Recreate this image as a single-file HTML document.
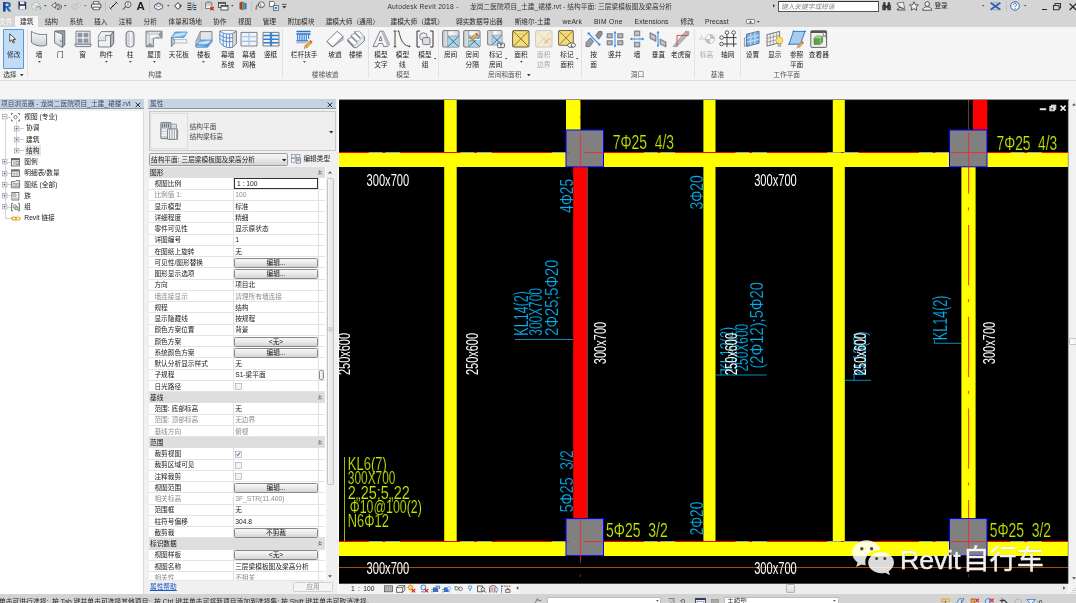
<!DOCTYPE html>
<html lang="zh"><head><meta charset="utf-8"><title>Autodesk Revit 2018</title>
<style>
html,body{margin:0;padding:0}
body{width:1076px;height:603px;overflow:hidden;position:relative;background:#f5f5f5;font-family:"Liberation Sans","Noto Sans CJK SC",sans-serif;font-size:6.7px;color:#1a1a1a;line-height:8px}
#app{position:absolute;left:-6px;top:-6px;width:1088px;height:615px;overflow:hidden;will-change:transform;filter:blur(.3px);background:#f5f5f5}
#in{position:absolute;left:6px;top:6px;width:1076px;height:603px}
.a{position:absolute;white-space:nowrap}
.c{position:absolute;white-space:nowrap;transform:translateX(-50%);text-align:center}
.g{color:#8c8c8c}
svg{position:absolute;display:block;overflow:visible}
svg text{font-family:"Liberation Sans","Noto Sans CJK SC",sans-serif}
.cad{font-family:"Liberation Sans",sans-serif;stroke:#000;stroke-width:.22px}
.btn{position:absolute;box-sizing:border-box;border:1px solid #8a8a8a;border-radius:1.5px;background:linear-gradient(#f8f8f8,#e9e9e9 50%,#d4d4d4);text-align:center;line-height:8px}
.row{position:absolute;left:149px;width:176px;height:11.25px;box-sizing:border-box;border-bottom:1px solid #e4e4e4;background:#fff}
.sec{position:absolute;left:149px;width:176px;height:11.25px;background:#dedede}
</style></head><body><div id="app"><div id="in">
<!--TOP-->
<div class="a" style="left:-6px;top:-6px;width:1088px;height:33px;background:#d5d5d5"></div>
<div class="a" style="left:14.8px;top:15.8px;width:23.6px;height:11.4px;background:#f5f5f5;border-radius:1px 1px 0 0"></div>
<div class="a" style="left:-1px;top:17.6px;color:#fff">文件</div>
<div class="a" style="left:20px;top:17.6px;color:#2a2a2a">建筑</div>
<div class="a" style="left:44.7px;top:17.6px;color:#2a2a2a">结构</div>
<div class="a" style="left:69.5px;top:17.6px;color:#2a2a2a">系统</div>
<div class="a" style="left:94.1px;top:17.6px;color:#2a2a2a">插入</div>
<div class="a" style="left:118.8px;top:17.6px;color:#2a2a2a">注释</div>
<div class="a" style="left:143.5px;top:17.6px;color:#2a2a2a">分析</div>
<div class="a" style="left:168.6px;top:17.6px;color:#2a2a2a">体量和场地</div>
<div class="a" style="left:213.1px;top:17.6px;color:#2a2a2a">协作</div>
<div class="a" style="left:238px;top:17.6px;color:#2a2a2a">视图</div>
<div class="a" style="left:262.7px;top:17.6px;color:#2a2a2a">管理</div>
<div class="a" style="left:287.6px;top:17.6px;color:#2a2a2a">附加模块</div>
<div class="a" style="left:325.7px;top:17.6px;color:#2a2a2a">建模大师（通用）</div>
<div class="a" style="left:390.5px;top:17.6px;color:#2a2a2a">建模大师（建筑）</div>
<div class="a" style="left:456px;top:17.6px;color:#2a2a2a">翱实数据导出器</div>
<div class="a" style="left:514.7px;top:17.6px;color:#2a2a2a">斯维尔-土建</div>
<div class="a" style="left:562.6px;top:17.6px;color:#2a2a2a;letter-spacing:0.16px">weArk</div>
<div class="a" style="left:594px;top:17.6px;color:#2a2a2a;letter-spacing:0.34px">BIM One</div>
<div class="a" style="left:634.6px;top:17.6px;color:#2a2a2a;letter-spacing:0.12px">Extensions</div>
<div class="a" style="left:680.5px;top:17.6px;color:#2a2a2a">修改</div>
<div class="a" style="left:705px;top:17.6px;color:#2a2a2a;letter-spacing:0.14px">Precast</div>
<svg style="left:746px;top:19.4px" width="9" height="5" viewBox="0 0 9 5"><rect x=".4" y=".4" width="8.2" height="4.2" rx="1" fill="#f4f4f4" stroke="#555" stroke-width=".7"/><path d="M3 3.4L4.5 1.6L6 3.4Z" fill="#333"/></svg>
<svg style="left:757px;top:21.2px" width="2.6" height="1.7" viewBox="0 0 2.6 1.7"><path d="M0 0H2.6L1.3 1.7Z" fill="#333"/></svg>
<div class="a" style="left:387.4px;top:2.7px;color:#333;letter-spacing:.26px">Autodesk Revit 2018 -</div>
<div class="a" style="left:470px;top:2.7px;color:#333;letter-spacing:.05px">龙岗二医院项目_土建_裙楼.rvt - 结构平面: 三层梁模板图及梁高分析</div>
<svg style="left:1.6px;top:0.8px" width="10" height="11" viewBox="0 0 10 11"><path d="M1 1H5.5C8 1 8.8 2.4 8.8 3.8C8.8 5.4 7.8 6.4 6.2 6.6L9.4 10.4H6.6L4 6.8H3.4V10.4H1Z" fill="#1f63b5"/><path d="M3.4 2.8V5H5.2C6.2 5 6.6 4.5 6.6 3.9C6.6 3.2 6.2 2.8 5.2 2.8Z" fill="#d5d5d5"/><path d="M1 1H3.4V10.4H1Z" fill="#164a94"/></svg>
<svg style="left:18px;top:1.2px" width="8.6" height="8.6" viewBox="0 0 8.6 8.6"><path d="M.4 .4H7.2L8.2 1.4V8.2H.4Z" fill="#27335a"/><rect x="2" y=".4" width="4.4" height="2.8" fill="#e9ecf3"/><rect x="1.6" y="4.8" width="5.4" height="3.4" fill="#f2f2f2"/></svg>
<svg style="left:31px;top:0.8px" width="10.5" height="10" viewBox="0 0 10.5 10"><path d="M1 3L5 1L9 3V7.4L5 9.4L1 7.4Z" fill="#e6e6e6" stroke="#a9a9a9" stroke-width=".6"/><path d="M1 3L5 5L9 3M5 5V9.4" fill="none" stroke="#b5b5b5" stroke-width=".5"/><path d="M5.6 7.6A2 2 0 1 1 9.4 8.4" fill="none" stroke="#58a855" stroke-width="1"/></svg>
<svg style="left:44.2px;top:5.2px" width="2.6" height="1.6" viewBox="0 0 2.6 1.6"><path d="M0 0H2.6L1.3 1.6Z" fill="#444"/></svg>
<svg style="left:51px;top:1.6px" width="11" height="8" viewBox="0 0 11 8"><path d="M.6 3.4L4.6 .5V2.2H7.2C9.4 2.2 10.4 3.5 10.4 5C10.4 6.6 9.2 7.5 7.4 7.5H6.4V6.3H7.2C8.4 6.3 9 5.8 9 5C9 4.1 8.4 3.6 7.2 3.6H4.6V6.3Z" fill="#f2f2f2" stroke="#333" stroke-width=".7" stroke-linejoin="round"/></svg>
<svg style="left:64.2px;top:5.2px" width="2.6" height="1.6" viewBox="0 0 2.6 1.6"><path d="M0 0H2.6L1.3 1.6Z" fill="#444"/></svg>
<svg style="left:71px;top:1.6px" width="11" height="8" viewBox="0 0 11 8"><path d="M10.4 3.4L6.4 .5V2.2H3.8C1.6 2.2 .6 3.5 .6 5C.6 6.6 1.8 7.5 3.6 7.5H4.6V6.3H3.8C2.6 6.3 2 5.8 2 5C2 4.1 2.6 3.6 3.8 3.6H6.4V6.3Z" fill="#dedede" stroke="#b9b9b9" stroke-width=".7" stroke-linejoin="round"/></svg>
<svg style="left:84.4px;top:5.2px" width="2.6" height="1.6" viewBox="0 0 2.6 1.6"><path d="M0 0H2.6L1.3 1.6Z" fill="#777"/></svg>
<svg style="left:91px;top:1.4px" width="10.4" height="9.4" viewBox="0 0 10.4 9.4"><path d="M2.4 3V.6H8V3" fill="#fff" stroke="#333" stroke-width=".7"/><rect x=".5" y="3" width="9.4" height="4.2" rx="1" fill="#f0f0f0" stroke="#222" stroke-width=".8"/><path d="M2 6.2H8.4V8.8H2Z" fill="#fff" stroke="#333" stroke-width=".7"/></svg>
<div class="a" style="left:105px;top:1px;width:0;height:11px;border-left:1px solid #c2c2c2"></div>
<svg style="left:109px;top:1.4px" width="9" height="9" viewBox="0 0 9 9"><path d="M1.4 7.6L7.6 1.4" stroke="#222" stroke-width="1"/><path d="M.4 6.4L2.6 8.6M6.4 .4L8.6 2.6" stroke="#222" stroke-width=".8"/><path d="M3.4 4.4L4.6 5.6" stroke="#1f63b5" stroke-width=".8"/></svg>
<svg style="left:122px;top:1.4px" width="10" height="9.4" viewBox="0 0 10 9.4"><circle cx="6" cy="3.6" r="3" fill="#f4f4f4" stroke="#333" stroke-width=".8"/><path d="M3.6 5.6L.8 8.8" stroke="#333" stroke-width="1"/><path d="M6 2V5" stroke="#333" stroke-width=".7"/></svg>
<div class="a" style="left:136.4px;top:-0.4px;font-size:11.5px;line-height:12px;font-weight:bold;color:#222">A</div>
<div class="a" style="left:149px;top:1px;width:0;height:11px;border-left:1px solid #c2c2c2"></div>
<svg style="left:153.6px;top:1.6px" width="9.4" height="8.4" viewBox="0 0 9.4 8.4"><path d="M.6 3L4.6 .8L8.6 3V6L4.6 8L.6 6Z" fill="#e9edf3" stroke="#3a4b6b" stroke-width=".8"/><ellipse cx="4.6" cy="3.2" rx="2.4" ry="1.2" fill="#fff" stroke="#3a4b6b" stroke-width=".6"/></svg>
<svg style="left:166.8px;top:5.2px" width="2.6" height="1.6" viewBox="0 0 2.6 1.6"><path d="M0 0H2.6L1.3 1.6Z" fill="#444"/></svg>
<svg style="left:173.6px;top:1.8px" width="8.4" height="8" viewBox="0 0 8.4 8"><path d="M4 .6L7.4 4L4 7.4L.6 4Z" fill="#fafafa" stroke="#222" stroke-width=".9"/><path d="M5.6 2.4L7.6 4L5.6 5.6Z" fill="#222"/></svg>
<svg style="left:187px;top:1.6px" width="9.6" height="8.6" viewBox="0 0 9.6 8.6"><path d="M.4 1.2H4.4M.4 3.4H4.4M.4 5.6H4.4M.4 7.6H4.4M6.4 3.4H9.2M6.4 5.6H9.2M6.4 7.6H9.2" stroke="#222" stroke-width=".9"/><path d="M6.6 .4L4.6 8.2" stroke="#2d8fe0" stroke-width=".9"/></svg>
<div class="a" style="left:200.6px;top:1px;width:0;height:11px;border-left:1px solid #c2c2c2"></div>
<svg style="left:205px;top:1.4px" width="9.4" height="9.4" viewBox="0 0 9.4 9.4"><rect x=".5" y="2" width="6.4" height="5.6" fill="#f2f2f2" stroke="#555" stroke-width=".7"/><path d="M1.6 .6H6M.5 4H6.9" stroke="#777" stroke-width=".6"/><path d="M5.4 6L8.8 9.2M8.8 6L5.4 9.2" stroke="#e02020" stroke-width="1.2"/></svg>
<svg style="left:217.6px;top:1.6px" width="10.6" height="8.6" viewBox="0 0 10.6 8.6"><rect x=".5" y=".5" width="7" height="5" fill="#f4f4f4" stroke="#333" stroke-width=".8"/><rect x="3" y="3.4" width="7" height="4.6" fill="#fff" stroke="#333" stroke-width=".8"/><path d="M.5 1.6H7.5M3 4.6H10" stroke="#333" stroke-width=".8"/></svg>
<svg style="left:231px;top:5.2px" width="2.6" height="1.6" viewBox="0 0 2.6 1.6"><path d="M0 0H2.6L1.3 1.6Z" fill="#444"/></svg>
<svg style="left:239px;top:1.2px" width="8" height="9.6" viewBox="0 0 8 9.6"><path d="M.5 1.5L3.4 .4V9.2L.5 8Z" fill="#b5382e"/><path d="M3.4 .4L5.6 1.4V8.6L3.4 9.2Z" fill="#4a9a4a"/><path d="M5.6 1.4L7.6 2.2V8L5.6 8.6Z" fill="#3f6fc4"/></svg>
<div class="a" style="left:251.4px;top:1px;width:0;height:11px;border-left:1px solid #c2c2c2"></div>
<svg style="left:254.6px;top:1.4px" width="10.4" height="9.6" viewBox="0 0 10.4 9.6"><circle cx="6.4" cy="3.8" r="3" fill="#f4f4f4" stroke="#444" stroke-width=".8"/><path d="M1 8.8C1 5.6 2.4 3 4.4 2.4" fill="none" stroke="#444" stroke-width=".9"/><path d="M5.6 2.6V5.4H7.4" fill="none" stroke="#555" stroke-width=".6"/></svg>
<svg style="left:269px;top:1.2px" width="10" height="9.8" viewBox="0 0 10 9.8"><path d="M.5 .5H4.6L5.6 1.6V5.6H.5Z" fill="#fafafa" stroke="#444" stroke-width=".7"/><rect x="4.4" y="4.4" width="5" height="5" fill="#fff" stroke="#444" stroke-width=".7"/><rect x="5.6" y="5.8" width="2.6" height="2.4" fill="#3a86d8"/></svg>
<svg style="left:282.4px;top:3.6px" width="4.6" height="4.6" viewBox="0 0 4.6 4.6"><path d="M0 .4H4.6" stroke="#333" stroke-width=".8"/><path d="M.2 2H4.4L2.3 4.4Z" fill="#333"/></svg>
<svg style="left:773.4px;top:3.6px" width="2" height="3.4" viewBox="0 0 2 3.4"><path d="M0 0L2 1.7L0 3.4Z" fill="#333"/></svg>
<div class="a" style="left:778.4px;top:0.6px;width:100.8px;height:11.4px;box-sizing:border-box;border:1px solid #555;border-top:1.4px solid #333;background:#fff"></div>
<div class="a" style="left:781px;top:2.8px;color:#8a8a8a;font-style:italic">键入关键字或短语</div>
<svg style="left:882px;top:1.8px" width="9.6" height="8.6" viewBox="0 0 9.6 8.6"><path d="M.6 3.2H3.6V8H.6ZM5.6 3.2H8.6V8H5.6ZM1.4 .6H3.2V3.2H1.4ZM6 .6H7.8V3.2H6ZM3.6 4H5.6V5.6H3.6Z" fill="#444" stroke="#222" stroke-width=".5"/></svg>
<svg style="left:896px;top:1.4px" width="10.6" height="9.6" viewBox="0 0 10.6 9.6"><path d="M1 2.2C2.4 6 5 7.4 8.6 7.4" fill="none" stroke="#333" stroke-width=".9"/><path d="M1 2.2L7.4 1.2L8.6 7.4" fill="#f2f2f2" stroke="#333" stroke-width=".6"/><path d="M3.6 6L1 9H9.6" fill="none" stroke="#333" stroke-width=".8"/></svg>
<svg style="left:909px;top:1.2px" width="10" height="9.6" viewBox="0 0 10 9.6"><path d="M5 .8L6.3 3.7L9.4 4L7.1 6.1L7.8 9.2L5 7.6L2.2 9.2L2.9 6.1L.6 4L3.7 3.7Z" fill="#f6f6f6" stroke="#333" stroke-width=".8" stroke-linejoin="round"/></svg>
<svg style="left:922px;top:1.2px" width="10.4" height="9.6" viewBox="0 0 10.4 9.6"><circle cx="5.2" cy="3" r="2.3" fill="#f4f4f4" stroke="#333" stroke-width=".8"/><path d="M.6 9.2C1 6.8 2.8 5.8 5.2 5.8C7.6 5.8 9.4 6.8 9.8 9.2Z" fill="#f4f4f4" stroke="#333" stroke-width=".8"/></svg>
<div class="a" style="left:934.4px;top:2.4px;color:#222">登录</div>
<svg style="left:982.4px;top:5.4px" width="2.4" height="1.5" viewBox="0 0 2.4 1.5"><path d="M0 0H2.4L1.2 1.5Z" fill="#444"/></svg>
<svg style="left:990.4px;top:1.6px" width="11" height="8.6" viewBox="0 0 11 8.6"><path d="M.6 .8L5.5 4.3L.6 7.8M10.4 .8L5.5 4.3L10.4 7.8" fill="none" stroke="#2c5fa8" stroke-width="1.7"/><path d="M2.6 .8H8.4M2.6 7.8H8.4" stroke="#7aa0d4" stroke-width=".8"/></svg>
<div class="a" style="left:1005.8px;top:1px;width:0;height:11px;border-left:1px solid #c2c2c2"></div>
<svg style="left:1010px;top:1.2px" width="10" height="10" viewBox="0 0 10 10"><circle cx="5" cy="5" r="4.3" fill="#f6f8fc" stroke="#2c5fa8" stroke-width=".9"/><path d="M3.6 3.8C3.6 2.8 4.2 2.3 5 2.3C5.9 2.3 6.5 2.9 6.5 3.7C6.5 4.8 5 4.9 5 6.2" fill="none" stroke="#2c5fa8" stroke-width=".95"/><circle cx="5" cy="7.6" r=".6" fill="#2c5fa8"/></svg>
<svg style="left:1023.6px;top:5.4px" width="2.4" height="1.5" viewBox="0 0 2.4 1.5"><path d="M0 0H2.4L1.2 1.5Z" fill="#444"/></svg>
<div class="a" style="left:1041.6px;top:8.6px;width:5px;height:1.2px;background:#222"></div>
<svg style="left:1053px;top:2.6px" width="8.4" height="7.4" viewBox="0 0 8.4 7.4"><rect x="2" y=".5" width="5.6" height="4.4" fill="none" stroke="#222" stroke-width=".9"/><rect x=".5" y="2.6" width="5.6" height="4.2" fill="#d5d5d5" stroke="#222" stroke-width=".9"/></svg>
<svg style="left:1068.6px;top:2.6px" width="8" height="7.6" viewBox="0 0 8 7.6"><path d="M.6 .6L7.2 7M7.2 .6L.6 7" stroke="#222" stroke-width="1.2"/></svg>
<div class="a" style="left:-6px;top:27px;width:1088px;height:53.6px;background:#f5f5f5;border-bottom:1px solid #dcdcdc;box-sizing:border-box"></div>
<div class="a" style="left:2.9px;top:28.6px;width:21.6px;height:40.8px;box-sizing:border-box;border:1px solid #4f9be0;border-radius:1px;background:#c3dcf3"></div>
<svg style="left:9.4px;top:33px" width="7" height="11" viewBox="0 0 7 11"><path d="M.8 .8V8.6L2.8 6.8L4.2 10L5.4 9.4L4 6.4H6.6Z" fill="#fff" stroke="#222" stroke-width=".8" stroke-linejoin="round"/></svg>
<div class="c" style="left:13.7px;top:51px;color:#1c2b45">修改</div>
<div class="a" style="left:3.2px;top:71.3px;color:#333">选择</div>
<svg style="left:19.6px;top:73.8px" width="3.6" height="2.2" viewBox="0 0 3.6 2.2"><path d="M0 0H3.6L1.8 2.2Z" fill="#333"/></svg>
<div class="a" style="left:27.3px;top:29px;width:0;height:49px;border-left:1px solid #e2e2e2"></div>
<div class="a" style="left:282px;top:29px;width:0;height:49px;border-left:1px solid #e2e2e2"></div>
<div class="a" style="left:368.4px;top:29px;width:0;height:49px;border-left:1px solid #e2e2e2"></div>
<div class="a" style="left:438px;top:29px;width:0;height:49px;border-left:1px solid #e2e2e2"></div>
<div class="a" style="left:581.4px;top:29px;width:0;height:49px;border-left:1px solid #e2e2e2"></div>
<div class="a" style="left:694.3px;top:29px;width:0;height:49px;border-left:1px solid #e2e2e2"></div>
<div class="a" style="left:740.3px;top:29px;width:0;height:49px;border-left:1px solid #e2e2e2"></div>
<div class="c" style="left:155px;top:71.3px;color:#555">构建</div>
<div class="c" style="left:325.2px;top:71.3px;color:#555">楼梯坡道</div>
<div class="c" style="left:403px;top:71.3px;color:#555">模型</div>
<div class="c" style="left:637.4px;top:71.3px;color:#555">洞口</div>
<div class="c" style="left:717.4px;top:71.3px;color:#555">基准</div>
<div class="c" style="left:786.7px;top:71.3px;color:#555">工作平面</div>
<div class="a" style="left:488px;top:71.3px;color:#555">房间和面积</div>
<svg style="left:527px;top:73.8px" width="3.6" height="2.2" viewBox="0 0 3.6 2.2"><path d="M0 0H3.6L1.8 2.2Z" fill="#333"/></svg>
<svg style="left:0;top:0" width="0" height="0"><defs><linearGradient id="gv" x1="0" y1="0" x2="0" y2="1"><stop offset="0" stop-color="#fafbfc"/><stop offset="1" stop-color="#c9cdd3"/></linearGradient><linearGradient id="gh" x1="0" y1="0" x2="1" y2="0"><stop offset="0" stop-color="#c4c8ce"/><stop offset=".5" stop-color="#f7f8f9"/><stop offset="1" stop-color="#cfd3d8"/></linearGradient><linearGradient id="gb" x1="0" y1="0" x2="1" y2="1"><stop offset="0" stop-color="#3f9ae8"/><stop offset=".5" stop-color="#b9defa"/><stop offset="1" stop-color="#3f9ae8"/></linearGradient></defs></svg>
<svg style="left:30px;top:29.8px" width="18" height="18" viewBox="0 0 18 18"><path d="M1.4 1.4C6 4.6 12 5 16.6 4.2V15C12 16.8 6 16.4 1.4 12.4Z" fill="url(#gv)" stroke="#5f646c" stroke-width=".8" stroke-linejoin="round"/></svg>
<div class="c" style="left:39px;top:51px;color:#222">墙</div>
<svg style="left:37.6px;top:61.4px" width="2.8" height="1.7" viewBox="0 0 2.8 1.7"><path d="M0 0H2.8L1.4 1.7Z" fill="#444"/></svg>
<svg style="left:51.2px;top:29.8px" width="18" height="18" viewBox="0 0 18 18"><path d="M4 1L13.8 .6V15L11 17.4Z" fill="#9aa0ab" stroke="#5f646c" stroke-width=".8" stroke-linejoin="round"/><path d="M3.6 1.4L11.4 4V17.4L3.6 13Z" fill="url(#gv)" stroke="#5f646c" stroke-width=".8" stroke-linejoin="round"/><circle cx="9.8" cy="11" r=".7" fill="#666"/></svg>
<div class="c" style="left:60.2px;top:51px;color:#222">门</div>
<svg style="left:73.7px;top:29.8px" width="18" height="18" viewBox="0 0 18 18"><rect x="2" y="1.2" width="14" height="13" fill="#f2f3f5" stroke="#5f646c" stroke-width=".8" stroke-linejoin="round"/><path d="M3.6 2.8H8.4V7.2H3.6ZM9.6 2.8H14.4V7.2H9.6ZM3.6 8.4H8.4V12.8H3.6ZM9.6 8.4H14.4V12.8H9.6Z" fill="#8d95a3"/><path d="M.8 14.2H17.2L16.4 16.6H1.6Z" fill="#e9ebee" stroke="#5f646c" stroke-width=".8" stroke-linejoin="round"/></svg>
<div class="c" style="left:82.7px;top:51px;color:#222">窗</div>
<svg style="left:97.3px;top:29.8px" width="18" height="18" viewBox="0 0 18 18"><path d="M1.4 6L4.4 1.6H16.6V13.4L13.6 17H1.4Z" fill="#eef0f2" stroke="#5f646c" stroke-width=".8" stroke-linejoin="round"/><path d="M16.6 1.6L13.6 5.4V17" fill="none" stroke="#5f646c" stroke-width=".8" stroke-linejoin="round"/><path d="M13.6 5.4H8.6V10.6H1.4" fill="none" stroke="#5f646c" stroke-width=".8" stroke-linejoin="round"/><path d="M13.6 5.4V17L16.6 13.4V1.6Z" fill="#b9bec6" stroke="#5f646c" stroke-width=".8" stroke-linejoin="round"/><path d="M1.6 6.2H8.4V10.4H1.6Z" fill="#dfe2e6"/></svg>
<div class="c" style="left:106.3px;top:51px;color:#222">构件</div>
<svg style="left:104.89999999999999px;top:61.4px" width="2.8" height="1.7" viewBox="0 0 2.8 1.7"><path d="M0 0H2.8L1.4 1.7Z" fill="#444"/></svg>
<svg style="left:121px;top:29.8px" width="18" height="18" viewBox="0 0 18 18"><rect x="5" y="1.2" width="8" height="15.8" rx="3.2" fill="url(#gh)" stroke="#5f646c" stroke-width=".8" stroke-linejoin="round"/><path d="M8 3V15.4" stroke="#aab0b8" stroke-width=".8"/></svg>
<div class="c" style="left:130px;top:51px;color:#222">柱</div>
<svg style="left:128.6px;top:61.4px" width="2.8" height="1.7" viewBox="0 0 2.8 1.7"><path d="M0 0H2.8L1.4 1.7Z" fill="#444"/></svg>
<svg style="left:145px;top:29.8px" width="18" height="18" viewBox="0 0 18 18"><path d="M1 1.2H17V8H8.4V16.8H1Z" fill="#d9dce0" stroke="#5f646c" stroke-width=".8" stroke-linejoin="round"/><path d="M1 1.2L4.6 4.6H13.6L17 1.2M4.6 4.6V13.4L1 16.8M13.6 4.6L17 8M4.6 13.4L8.4 16.8" fill="none" stroke="#868c95" stroke-width=".7"/><path d="M4.6 4.6H13.6V5.6L8.4 8L5.6 8V13.4H4.6Z" fill="#f7f8f9"/><path d="M1 16.8L4.6 13.4H5.6L8.4 16.8Z" fill="#8f959e"/><path d="M13.6 4.6L17 1.2V8Z" fill="#8f959e"/></svg>
<div class="c" style="left:154px;top:51px;color:#222">屋顶</div>
<svg style="left:152.6px;top:61.4px" width="2.8" height="1.7" viewBox="0 0 2.8 1.7"><path d="M0 0H2.8L1.4 1.7Z" fill="#444"/></svg>
<svg style="left:169.8px;top:29.8px" width="18" height="18" viewBox="0 0 18 18"><path d="M1.4 7.4V16.6L4.6 13V9.6Z" fill="#c3c7cd" stroke="#5f646c" stroke-width=".8" stroke-linejoin="round"/><path d="M4.6 9.6H16.8V13H4.6Z" fill="#f4f5f6" stroke="#9096a0" stroke-width=".6"/><path d="M1.4 7.4L5.2 2H17.4L14 7.4Z" fill="url(#gb)" stroke="#3b82c9" stroke-width=".7" stroke-linejoin="round"/><path d="M5 5.4C7 3.6 9 6 11 4.4C12.4 3.4 13.6 4.2 14.6 3.6" fill="none" stroke="#eaf6ff" stroke-width=".9"/></svg>
<div class="c" style="left:178.8px;top:51px;color:#222">天花板</div>
<svg style="left:194.7px;top:29.8px" width="18" height="18" viewBox="0 0 18 18"><path d="M1 11.4L5.4 1.6H17V10.2L12.6 17H1Z" fill="#e3e5e8" stroke="#5f646c" stroke-width=".8" stroke-linejoin="round"/><path d="M5.4 1.6V10.2H17M5.4 10.2L1 15" fill="none" stroke="#8b919a" stroke-width=".7"/><path d="M1.2 11.8L5.4 1.8V10.2Z" fill="#aeb3bb"/><path d="M1 15L5.4 10.2H17L12.6 15ZM1 15H12.6V17H1ZM12.6 15L17 10.2V12L12.6 17Z" fill="url(#gb)" stroke="#3b82c9" stroke-width=".6" stroke-linejoin="round"/><path d="M4 13.4C6 11.8 8 14 10 12.6C11.6 11.6 13 12.4 14.4 11.4" fill="none" stroke="#eaf6ff" stroke-width=".9"/></svg>
<div class="c" style="left:203.7px;top:51px;color:#222">楼板</div>
<svg style="left:202.29999999999998px;top:61.4px" width="2.8" height="1.7" viewBox="0 0 2.8 1.7"><path d="M0 0H2.8L1.4 1.7Z" fill="#444"/></svg>
<svg style="left:218.7px;top:29.8px" width="18" height="18" viewBox="0 0 18 18"><path d="M.8 1C4 4 9 4.6 13.6 3.6L17.4 1.2V13.6L13.6 17.4C9 18 4 17.4 .8 12Z" fill="#f3f6fa" stroke="#3c6fb3" stroke-width=".8" stroke-linejoin="round"/><path d="M.8 1C5 .2 12 -.2 17.4 1.2" fill="none" stroke="#777" stroke-width=".7"/><path d="M13.6 3.6V17.4L17.4 13.6V1.2Z" fill="#d5d9de" stroke="#666" stroke-width=".6"/><path d="M4.2 3.4V15.6M7.4 4.2V16.9M10.6 4.2V17.4M.8 4.8C4 7.8 9 8.4 13.6 7.6M.8 8.6C4 11.6 9 12.2 13.6 11.4" fill="none" stroke="#3c78c4" stroke-width=".8"/></svg>
<div class="c" style="left:227.7px;top:51px;color:#222">幕墙</div>
<div class="c" style="left:227.7px;top:61px;color:#222">系统</div>
<svg style="left:240px;top:29.8px" width="18" height="18" viewBox="0 0 18 18"><rect x="1" y="2.4" width="16" height="13.6" fill="#f2f3f5" stroke="#5f646c" stroke-width=".8" stroke-linejoin="round"/><path d="M1.4 6.8H16.6M1.4 11.4H16.6M9 2.8V15.6" stroke="#8cc2f2" stroke-width="1.1"/><path d="M1.4 6.2H16.6M1.4 10.8H16.6" stroke="#d0d4da" stroke-width=".5"/></svg>
<div class="c" style="left:249px;top:51px;color:#222">幕墙</div>
<div class="c" style="left:249px;top:61px;color:#222">网格</div>
<svg style="left:261.6px;top:29.8px" width="18" height="18" viewBox="0 0 18 18"><rect x="1" y="2.4" width="16" height="13.6" fill="#f2f3f5" stroke="#5f646c" stroke-width=".8" stroke-linejoin="round"/><path d="M1.2 5.6H16.8M1.2 9.2H16.8M1.2 12.8H16.8" stroke="#2e7fd4" stroke-width="1.5"/><path d="M9 2.4V16" stroke="#1f5fae" stroke-width="2.2"/><path d="M9 2.4V16" stroke="#8cc2f2" stroke-width=".7"/></svg>
<div class="c" style="left:270.6px;top:51px;color:#222">竖梃</div>
<svg style="left:295.2px;top:29.8px" width="18" height="18" viewBox="0 0 18 18"><path d="M1.4 1.6H15.6M1.4 4H15.6" stroke="#2d72c8" stroke-width="1.5"/><path d="M1.4 10.8H13" stroke="#2d72c8" stroke-width="1.3"/><path d="M2.6 4V10.6M4.8 4V10.6M7 4V10.6M9.2 4V10.6M11.4 4V10.6M13.6 4V9" stroke="#3b86dc" stroke-width="1.2"/><path d="M1.4 12.8H11" stroke="#9aa0aa" stroke-width="1"/><g transform="translate(10.4 17.2) scale(1.25)"><g transform="translate(0 0) rotate(45)"><rect x="-1.1" y="-6" width="2.2" height="5" fill="#f1b232" stroke="#8a5a12" stroke-width=".4"/><path d="M-1.1 -1L0 1.4L1.1 -1Z" fill="#f4d9a8" stroke="#8a5a12" stroke-width=".4"/><rect x="-1.1" y="-7" width="2.2" height="1.2" fill="#d2553f"/></g></g></svg>
<div class="c" style="left:304.2px;top:51px;color:#222">栏杆扶手</div>
<svg style="left:302.8px;top:61.4px" width="2.8" height="1.7" viewBox="0 0 2.8 1.7"><path d="M0 0H2.8L1.4 1.7Z" fill="#444"/></svg>
<svg style="left:326px;top:29.8px" width="18" height="18" viewBox="0 0 18 18"><path d="M.9 11.4L11.2 1.3L17 6.5V9.6L6.5 17Z" fill="#fdfdfe" stroke="#5f646c" stroke-width=".8" stroke-linejoin="round"/><path d="M6.5 17L17 6.5V9.6Z" fill="#b4bcc8"/><path d="M.9 11.4L6.5 17L17 6.5" fill="none" stroke="#5f646c" stroke-width=".8" stroke-linejoin="round"/></svg>
<div class="c" style="left:335px;top:51px;color:#222">坡道</div>
<svg style="left:346.6px;top:29.8px" width="18" height="18" viewBox="0 0 18 18"><path d="M.8 9.2L4.2 7.6V5.2L7.6 3.6V1.6L12 1.3L17.4 6.9V10.9L9.6 17.6H6.8L.8 11.2Z" fill="#e6e8ec" stroke="#5f646c" stroke-width=".8" stroke-linejoin="round"/><path d="M4.2 7.6V5.2L10.4 11.2V13.6ZM7.6 3.6V1.6L13.4 7.4V9.4Z" fill="#8a919e"/><path d="M.8 9.2L7 15.4V17.6H6.8L.8 11.2Z" fill="#757c88"/><path d="M.8 9.2L4.2 7.6L10.4 13.6L7 15.4ZM4.2 5.2L7.6 3.6L13.4 9.4L10.4 11.2ZM7.6 1.6L12 1.3L17.4 6.9L13.4 7.4Z" fill="#fdfdfe" stroke="#7d838d" stroke-width=".4" stroke-linejoin="round"/></svg>
<div class="c" style="left:355.6px;top:51px;color:#222">楼梯</div>
<svg style="left:372px;top:29.8px" width="18" height="18" viewBox="0 0 18 18"><path d="M1 16.6L8 1.2H11.4L17.6 14.6L15.4 16.6H11.6L10.6 13.4H6.4L5.2 16.6Z" fill="#f4f5f7" stroke="#5f646c" stroke-width=".8" stroke-linejoin="round"/><path d="M7.2 10.6H10L8.6 6.4Z" fill="#f5f5f5" stroke="#5f646c" stroke-width=".8" stroke-linejoin="round"/><path d="M11.4 1.2L17.6 14.6L15.4 16.6L9.4 2.4Z" fill="#b9bec6"/></svg>
<div class="c" style="left:381px;top:51px;color:#222">模型</div>
<div class="c" style="left:381px;top:61px;color:#222">文字</div>
<svg style="left:393.4px;top:29.8px" width="18" height="18" viewBox="0 0 18 18"><path d="M2 1V16.8M.6 1H3.4M.6 16.8H3.4" fill="none" stroke="#333" stroke-width=".9"/><path d="M5.4 1C7 1.6 6.6 15.4 16.6 16.4" fill="none" stroke="#333" stroke-width=".9"/><circle cx="5.4" cy="1.2" r=".8" fill="#333"/><circle cx="16.6" cy="16.4" r=".8" fill="#333"/></svg>
<div class="c" style="left:402.4px;top:51px;color:#222">模型</div>
<div class="c" style="left:402.4px;top:61px;color:#222">线</div>
<svg style="left:416px;top:29.8px" width="18" height="18" viewBox="0 0 18 18"><path d="M4 1H1V17H4M14 1H17V17H14" fill="none" stroke="#333" stroke-width="1"/><circle cx="7.4" cy="6.6" r="3.8" fill="#eceef1" stroke="#5f646c" stroke-width=".8" stroke-linejoin="round"/><rect x="6.6" y="7.6" width="7.4" height="7" rx="1" fill="#dcdfe3" stroke="#5f646c" stroke-width=".8" stroke-linejoin="round"/></svg>
<div class="c" style="left:425px;top:51px;color:#222">模型</div>
<div class="c" style="left:425px;top:61px;color:#222">组</div>
<svg style="left:434px;top:58.2px" width="2.4" height="1.5" viewBox="0 0 2.4 1.5"><path d="M0 0H2.4L1.2 1.5Z" fill="#444"/></svg>
<svg style="left:441.6px;top:29.8px" width="18" height="18" viewBox="0 0 18 18"><g opacity="1"><rect x=".6" y=".6" width="16.4" height="16.4" rx="1" fill="url(#gh)" stroke="#6a6f77" stroke-width=".9"/><rect x="5.8" y="6.2" width="11" height="10.6" fill="#a9d4ec"/><path d="M5.8 6.2L16.8 16.8M16.8 6.2L5.8 16.8" stroke="#2e3f55" stroke-width=".7"/><path d="M5.6 .8V17M5.6 6H17" stroke="#8a9098" stroke-width=".7"/></g></svg>
<div class="c" style="left:450.6px;top:51px;color:#222">房间</div>
<svg style="left:463.2px;top:29.8px" width="18" height="18" viewBox="0 0 18 18"><g opacity="1"><rect x=".6" y=".6" width="16.4" height="16.4" rx="1" fill="url(#gh)" stroke="#6a6f77" stroke-width=".9"/><rect x="5.8" y="6.2" width="11" height="10.6" fill="#a9d4ec"/><path d="M5.8 6.2L16.8 16.8M16.8 6.2L5.8 16.8" stroke="#2e3f55" stroke-width=".7"/><path d="M5.6 .8V17M5.6 6H17" stroke="#8a9098" stroke-width=".7"/></g><path d="M5.8 9.4H16.8" stroke="#fff" stroke-width="1.2"/><path d="M5.8 8.6H16.8" stroke="#59a6e6" stroke-width=".7"/><g transform="translate(8.4 10) scale(1.25)"><g transform="translate(0 0) rotate(45)"><rect x="-1.1" y="-6" width="2.2" height="5" fill="#f1b232" stroke="#8a5a12" stroke-width=".4"/><path d="M-1.1 -1L0 1.4L1.1 -1Z" fill="#f4d9a8" stroke="#8a5a12" stroke-width=".4"/><rect x="-1.1" y="-7" width="2.2" height="1.2" fill="#d2553f"/></g></g></svg>
<div class="c" style="left:472.2px;top:51px;color:#222">房间</div>
<div class="c" style="left:472.2px;top:61px;color:#222">分隔</div>
<svg style="left:486.6px;top:29.8px" width="18" height="18" viewBox="0 0 18 18"><g transform="scale(.88)"><g opacity="1"><rect x=".6" y=".6" width="16.4" height="16.4" rx="1" fill="url(#gh)" stroke="#6a6f77" stroke-width=".9"/><rect x="5.8" y="6.2" width="11" height="10.6" fill="#a9d4ec"/><path d="M5.8 6.2L16.8 16.8M16.8 6.2L5.8 16.8" stroke="#2e3f55" stroke-width=".7"/><path d="M5.6 .8V17M5.6 6H17" stroke="#8a9098" stroke-width=".7"/></g></g><rect x="10.6" y="13.2" width="6.8" height="4.4" rx=".8" fill="#f2f2f2" stroke="#444" stroke-width=".8"/><path d="M13 14.6H15M14 14.4V16.6" stroke="#333" stroke-width=".7"/></svg>
<div class="c" style="left:495.6px;top:51px;color:#222">标记</div>
<div class="c" style="left:495.6px;top:61px;color:#222">房间</div>
<svg style="left:504.6px;top:58.2px" width="2.4" height="1.5" viewBox="0 0 2.4 1.5"><path d="M0 0H2.4L1.2 1.5Z" fill="#444"/></svg>
<svg style="left:512px;top:29.8px" width="18" height="18" viewBox="0 0 18 18"><g opacity="1"><rect x=".6" y=".6" width="16.4" height="16.4" rx="1.2" fill="#f6dc74" stroke="#5d5a50" stroke-width="1"/><path d="M1 1L16.6 16.6M16.6 1L1 16.6" stroke="#4a4535" stroke-width=".7"/><path d="M1 4.4H16.6" stroke="#d9bd55" stroke-width=".6"/></g></svg>
<div class="c" style="left:521px;top:51px;color:#222">面积</div>
<svg style="left:519.6px;top:61.4px" width="2.8" height="1.7" viewBox="0 0 2.8 1.7"><path d="M0 0H2.8L1.4 1.7Z" fill="#444"/></svg>
<svg style="left:534.7px;top:29.8px" width="18" height="18" viewBox="0 0 18 18"><g opacity="0.28"><rect x=".6" y=".6" width="16.4" height="16.4" rx="1.2" fill="#f6dc74" stroke="#5d5a50" stroke-width="1"/><path d="M1 1L16.6 16.6M16.6 1L1 16.6" stroke="#4a4535" stroke-width=".7"/><path d="M1 4.4H16.6" stroke="#d9bd55" stroke-width=".6"/></g><g opacity=".35"><g transform="translate(10 13) rotate(45)"><rect x="-1.1" y="-6" width="2.2" height="5" fill="#f1b232" stroke="#8a5a12" stroke-width=".4"/><path d="M-1.1 -1L0 1.4L1.1 -1Z" fill="#f4d9a8" stroke="#8a5a12" stroke-width=".4"/><rect x="-1.1" y="-7" width="2.2" height="1.2" fill="#d2553f"/></g></g></svg>
<div class="c" style="left:543.7px;top:51px;color:#a9a9a9">面积</div>
<div class="c" style="left:543.7px;top:61px;color:#a9a9a9">边界</div>
<svg style="left:558px;top:29.8px" width="18" height="18" viewBox="0 0 18 18"><g transform="scale(.9)"><g opacity="1"><rect x=".6" y=".6" width="16.4" height="16.4" rx="1.2" fill="#f6dc74" stroke="#5d5a50" stroke-width="1"/><path d="M1 1L16.6 16.6M16.6 1L1 16.6" stroke="#4a4535" stroke-width=".7"/><path d="M1 4.4H16.6" stroke="#d9bd55" stroke-width=".6"/></g></g><ellipse cx="13.6" cy="15.2" rx="4" ry="2.3" fill="#f4f4f4" stroke="#444" stroke-width=".8"/><path d="M13.6 14V16.4M12.8 16.4H14.4" stroke="#333" stroke-width=".7"/></svg>
<div class="c" style="left:567px;top:51px;color:#222">标记</div>
<div class="c" style="left:567px;top:61px;color:#222">面积</div>
<svg style="left:576px;top:58.2px" width="2.4" height="1.5" viewBox="0 0 2.4 1.5"><path d="M0 0H2.4L1.2 1.5Z" fill="#444"/></svg>
<svg style="left:584.6px;top:29.8px" width="18" height="18" viewBox="0 0 18 18"><path d="M10.6 5.4L13.6 1.6H17V4.6L13.6 9.2Z" fill="#8d939d" stroke="#5f646c" stroke-width=".8" stroke-linejoin="round"/><path d="M1 12.4L5.4 7.8L8.6 11.4L4.6 16.6H1Z" fill="#9aa0aa" stroke="#5f646c" stroke-width=".8" stroke-linejoin="round"/><path d="M3.6 3.4L14.4 14.6" stroke="#2e8ae6" stroke-width="1.1"/><rect x="2.6" y="2.4" width="2" height="2" fill="#2e8ae6"/><rect x="13.4" y="13.6" width="2" height="2" fill="#2e8ae6"/></svg>
<div class="c" style="left:593.6px;top:51px;color:#222">按</div>
<div class="c" style="left:593.6px;top:61px;color:#222">面</div>
<svg style="left:605.8px;top:29.8px" width="18" height="18" viewBox="0 0 18 18"><path d="M1 3.6H6.4V8H1ZM11.6 3.6H17V8H11.6ZM1 10.6H6.4V15H1ZM11.6 10.6H17V15H11.6Z" fill="#8f959f" stroke="#6a7079" stroke-width=".6"/><path d="M2 4.6H5.4V7H2ZM12.6 4.6H16V7H12.6ZM2 11.6H5.4V14H2ZM12.6 11.6H16V14H12.6Z" fill="#b6bbc3"/><path d="M9 2V16.4" stroke="#2e8ae6" stroke-width="1"/><path d="M7.6 3.2L9 .8L10.4 3.2ZM7.6 15.2L9 17.6L10.4 15.2Z" fill="#2e8ae6"/></svg>
<div class="c" style="left:614.8px;top:51px;color:#222">竖井</div>
<svg style="left:628px;top:29.8px" width="18" height="18" viewBox="0 0 18 18"><path d="M6.4 1H11.8V5.8H6.4ZM6.4 12.2H11.8V17H6.4Z" fill="#9aa0aa" stroke="#6a7079" stroke-width=".7"/><path d="M7.4 2H10.8V4.8H7.4ZM7.4 13.2H10.8V16H7.4Z" fill="#c4c8ce"/><path d="M6.4 5.8V12.2M11.8 5.8V12.2" stroke="#b8bcc3" stroke-width=".6"/><path d="M3.2 9H15" stroke="#2e8ae6" stroke-width="1"/><path d="M4.2 7.6L1.8 9L4.2 10.4ZM14 7.6L16.4 9L14 10.4Z" fill="#2e8ae6"/></svg>
<div class="c" style="left:637px;top:51px;color:#222">墙</div>
<svg style="left:649.4px;top:29.8px" width="18" height="18" viewBox="0 0 18 18"><path d="M1 2.6L7 5.6V11.4L1 8.4ZM11 9L17 12V17L11 14Z" fill="#9aa0aa" stroke="#6a7079" stroke-width=".7" stroke-linejoin="round"/><path d="M2 4.4L6 6.4V9.6L2 7.6ZM12 10.8L16 12.8V15.2L12 13.2Z" fill="#c4c8ce"/><path d="M9 2V16" stroke="#2e8ae6" stroke-width="1"/><path d="M7.6 3.2L9 .8L10.4 3.2ZM7.6 14.8L9 17.2L10.4 14.8Z" fill="#2e8ae6"/></svg>
<div class="c" style="left:658.4px;top:51px;color:#222">垂直</div>
<svg style="left:672px;top:29.8px" width="18" height="18" viewBox="0 0 18 18"><path d="M1 16.6L13.4 1.4H16.8V4L5 16.6Z" fill="#b4b9c1" stroke="#858b94" stroke-width=".6"/><path d="M13.4 1.4L16.8 4" stroke="#777" stroke-width=".6"/><path d="M5 16.4V5.4H16.6" fill="none" stroke="#d9412f" stroke-width=".9"/></svg>
<div class="c" style="left:681px;top:51px;color:#222">老虎窗</div>
<svg style="left:697.5px;top:29.8px" width="18" height="18" viewBox="0 0 18 18"><g opacity=".32"><path d="M1 9H8" stroke="#555" stroke-width=".8"/><path d="M3.6 5V8" stroke="#555" stroke-width=".7"/><circle cx="12" cy="9" r="4.6" fill="#fff" stroke="#444" stroke-width=".8"/><path d="M12 4.4A4.6 4.6 0 0 1 16.6 9H12ZM12 13.6A4.6 4.6 0 0 1 7.400000000000001 9H12Z" fill="#555"/></g></svg>
<div class="c" style="left:706.5px;top:51px;color:#a9a9a9">标高</div>
<svg style="left:718.8px;top:29.8px" width="18" height="18" viewBox="0 0 18 18"><path d="M8 4.4V17M14.6 4.4V17M4.4 7.6H17.6M4.4 14H17.6" stroke="#333" stroke-width=".9"/><circle cx="8" cy="2.6" r="1.8" fill="#fafafa" stroke="#333" stroke-width=".8"/><circle cx="14.6" cy="2.6" r="1.8" fill="#fafafa" stroke="#333" stroke-width=".8"/><circle cx="2.6" cy="7.6" r="1.8" fill="#fafafa" stroke="#333" stroke-width=".8"/><circle cx="2.6" cy="14" r="1.8" fill="#fafafa" stroke="#333" stroke-width=".8"/></svg>
<div class="c" style="left:727.8px;top:51px;color:#222">轴网</div>
<svg style="left:743.4px;top:29.8px" width="18" height="18" viewBox="0 0 18 18"><path d="M1.4 8L3.6 6.6V15.4L1.4 16.4Z" fill="#e9ecf0" stroke="#41618a" stroke-width=".6"/><path d="M3.6 4.2L16 1.2V13.2L3.6 16.4Z" fill="#7fb0e2" stroke="#2c5f9e" stroke-width=".8" stroke-linejoin="round"/><path d="M7.8 3.2V15.4M12 2.2V14.4M3.6 8.2L16 5.2M3.6 12.2L16 9.2" stroke="#dcebf9" stroke-width=".8"/></svg>
<div class="c" style="left:752.4px;top:51px;color:#222">设置</div>
<svg style="left:765.7px;top:29.8px" width="18" height="18" viewBox="0 0 18 18"><path d="M1 4.6L13.6 1.4V12.6L1 16.2Z" fill="#f1f2f4" stroke="#555" stroke-width=".8" stroke-linejoin="round"/><path d="M4.2 3.8V15.2M7.4 3V14.4M10.6 2.2V13.6M1 8.4L13.6 5.2M1 12.2L13.6 9" stroke="#777" stroke-width=".6"/><circle cx="13.4" cy="10.4" r="3.4" fill="#fbe27a" stroke="#d8a514" stroke-width=".7"/><rect x="12" y="13.6" width="2.8" height="2.8" rx=".5" fill="#c9c9c9" stroke="#777" stroke-width=".5"/></svg>
<div class="c" style="left:774.7px;top:51px;color:#222">显示</div>
<svg style="left:787.6px;top:29.8px" width="18" height="18" viewBox="0 0 18 18"><path d="M5.4 1.4H17L12.4 14.2H1Z" fill="#a8cdee" stroke="#2d6fc0" stroke-width=".9" stroke-linejoin="round"/><circle cx="5.4" cy="1.4" r=".8" fill="#2d6fc0"/><circle cx="17" cy="1.4" r=".8" fill="#2d6fc0"/><circle cx="1" cy="14.2" r=".8" fill="#2d6fc0"/><g transform="translate(10.2 17) rotate(45)"><rect x="-1.1" y="-6" width="2.2" height="5" fill="#f1b232" stroke="#8a5a12" stroke-width=".4"/><path d="M-1.1 -1L0 1.4L1.1 -1Z" fill="#f4d9a8" stroke="#8a5a12" stroke-width=".4"/><rect x="-1.1" y="-7" width="2.2" height="1.2" fill="#d2553f"/></g></svg>
<div class="c" style="left:796.6px;top:51px;color:#222">参照</div>
<div class="c" style="left:796.6px;top:61px;color:#222">平面</div>
<svg style="left:809.8px;top:29.8px" width="18" height="18" viewBox="0 0 18 18"><rect x=".8" y=".8" width="15.8" height="16.6" rx=".8" fill="#f0f0f0" stroke="#555" stroke-width=".9"/><rect x=".8" y=".8" width="15.8" height="2.2" fill="#555"/><path d="M4 8L6.4 6H12.6V12L10.4 14.4H4Z" fill="#5fa348" stroke="#3c7a2c" stroke-width=".6"/><path d="M4 8H10.4V14.4M10.4 8L12.6 6" fill="none" stroke="#b9dba9" stroke-width=".6"/><path d="M6.4 6H12.6L10.4 8H4Z" fill="#9ccc86"/><path d="M13.4 1.4V6.4L14.6 5.4L15.6 7.4L16.4 7L15.4 5H17Z" fill="#fff" stroke="#333" stroke-width=".5"/></svg>
<div class="c" style="left:818.8px;top:51px;color:#222">查看器</div>
<!--LEFT-->
<div class="a" style="left:-6px;top:98.5px;width:344px;height:495.4px;background:#f0f0f0"></div>
<div class="a" style="left:-6px;top:99.1px;width:149.5px;height:9.4px;background:#c5d3e3;border-bottom:1.3px solid #8f959d"></div>
<div class="a" style="left:1px;top:100px;color:#3f4c60">项目浏览器 - 龙岗二医院项目_土建_裙楼.rvt</div>
<svg style="left:135.4px;top:101.6px" width="6" height="6" viewBox="0 0 6 6"><path d="M.6.6L5.2 5.2M5.2.6L.6 5.2" stroke="#111" stroke-width=".9"/></svg>
<div class="a" style="left:-6px;top:110.5px;width:149.5px;height:483.4px;background:#fff;border-right:1px solid #d9d9d9;box-sizing:border-box"></div>
<div class="a" style="left:4.5px;top:120px;width:0;height:98px;border-left:.7px solid #d6d6d6"></div>
<div class="a" style="left:16.3px;top:121px;width:0;height:27px;border-left:.7px solid #d6d6d6"></div>
<svg style="left:2.2px;top:114.4px" width="5.2" height="5.2" viewBox="0 0 5 5"><rect x=".25" y=".25" width="4.5" height="4.5" fill="#fff" stroke="#8f959e" stroke-width=".6"/><path d="M1.3 2.5H3.7" stroke="#2f4f9a" stroke-width=".6"/></svg>
<div class="a" style="left:7.4px;top:116.7px;width:3.5999999999999996px;height:0;border-top:.7px solid #cfcfcf"></div>
<div class="a" style="left:24.3px;top:113.1px">视图 (专业)</div>
<svg style="left:11.4px;top:112.8px" width="9" height="8.4" viewBox="0 0 9 8.4"><path d="M.5 2V.5H2M7 .5H8.5V2M8.5 6.4V7.9H7M2 7.9H.5V6.4" fill="none" stroke="#333" stroke-width=".7"/><circle cx="4.5" cy="4.2" r="1.7" fill="none" stroke="#555" stroke-width=".7"/></svg>
<svg style="left:14px;top:125.6px" width="5.2" height="5.2" viewBox="0 0 5 5"><rect x=".25" y=".25" width="4.5" height="4.5" fill="#fff" stroke="#8f959e" stroke-width=".6"/><path d="M1.3 2.5H3.7M2.5 1.3V3.7" stroke="#2f4f9a" stroke-width=".6"/></svg>
<div class="a" style="left:19.2px;top:127.89999999999999px;width:4.800000000000001px;height:0;border-top:.7px solid #cfcfcf"></div>
<div class="a" style="left:26px;top:124.3px">协调</div>
<svg style="left:14px;top:136.8px" width="5.2" height="5.2" viewBox="0 0 5 5"><rect x=".25" y=".25" width="4.5" height="4.5" fill="#fff" stroke="#8f959e" stroke-width=".6"/><path d="M1.3 2.5H3.7M2.5 1.3V3.7" stroke="#2f4f9a" stroke-width=".6"/></svg>
<div class="a" style="left:19.2px;top:139.1px;width:4.800000000000001px;height:0;border-top:.7px solid #cfcfcf"></div>
<div class="a" style="left:26px;top:135.5px">建筑</div>
<svg style="left:14px;top:148.0px" width="5.2" height="5.2" viewBox="0 0 5 5"><rect x=".25" y=".25" width="4.5" height="4.5" fill="#fff" stroke="#8f959e" stroke-width=".6"/><path d="M1.3 2.5H3.7M2.5 1.3V3.7" stroke="#2f4f9a" stroke-width=".6"/></svg>
<div class="a" style="left:19.2px;top:150.29999999999998px;width:4.800000000000001px;height:0;border-top:.7px solid #cfcfcf"></div>
<div class="a" style="left:24.6px;top:145.4px;width:16.6px;height:10.6px;background:#e6e6e6"></div>
<div class="a" style="left:26px;top:146.7px">结构</div>
<svg style="left:2.2px;top:159.3px" width="5.2" height="5.2" viewBox="0 0 5 5"><rect x=".25" y=".25" width="4.5" height="4.5" fill="#fff" stroke="#8f959e" stroke-width=".6"/><path d="M1.3 2.5H3.7M2.5 1.3V3.7" stroke="#2f4f9a" stroke-width=".6"/></svg>
<div class="a" style="left:7.4px;top:161.6px;width:3.5999999999999996px;height:0;border-top:.7px solid #cfcfcf"></div>
<div class="a" style="left:24.3px;top:158.0px">图例</div>
<svg style="left:11.4px;top:157.70000000000002px" width="9" height="8.4" viewBox="0 0 9 8.4"><rect x=".4" y=".4" width="8.2" height="7.6" fill="#f4f4f4" stroke="#444" stroke-width=".7"/><rect x=".4" y=".4" width="8.2" height="1.8" fill="#666"/><path d="M1.8 4H4M1.8 6H4M5 3.6H7.4V6.6H5Z" fill="none" stroke="#555" stroke-width=".6"/></svg>
<svg style="left:2.2px;top:170.6px" width="5.2" height="5.2" viewBox="0 0 5 5"><rect x=".25" y=".25" width="4.5" height="4.5" fill="#fff" stroke="#8f959e" stroke-width=".6"/><path d="M1.3 2.5H3.7M2.5 1.3V3.7" stroke="#2f4f9a" stroke-width=".6"/></svg>
<div class="a" style="left:7.4px;top:172.89999999999998px;width:3.5999999999999996px;height:0;border-top:.7px solid #cfcfcf"></div>
<div class="a" style="left:24.3px;top:169.3px">明细表/数量</div>
<svg style="left:11.4px;top:169.0px" width="9" height="8.4" viewBox="0 0 9 8.4"><rect x=".4" y=".8" width="8.2" height="6.8" fill="#fff" stroke="#444" stroke-width=".7"/><rect x=".4" y=".8" width="8.2" height="1.8" fill="#777"/><path d="M.4 4.3H8.6M.4 6H8.6M3.2 2.6V7.6M6 2.6V7.6" stroke="#777" stroke-width=".45"/></svg>
<svg style="left:2.2px;top:181.8px" width="5.2" height="5.2" viewBox="0 0 5 5"><rect x=".25" y=".25" width="4.5" height="4.5" fill="#fff" stroke="#8f959e" stroke-width=".6"/><path d="M1.3 2.5H3.7M2.5 1.3V3.7" stroke="#2f4f9a" stroke-width=".6"/></svg>
<div class="a" style="left:7.4px;top:184.1px;width:3.5999999999999996px;height:0;border-top:.7px solid #cfcfcf"></div>
<div class="a" style="left:24.3px;top:180.5px">图纸 (全部)</div>
<svg style="left:11.4px;top:180.20000000000002px" width="9" height="8.4" viewBox="0 0 9 8.4"><path d="M.4 1.6H4L5 .6H8.6V7.8H.4Z" fill="#f2f2f2" stroke="#444" stroke-width=".7"/><path d="M2 3.4H4.4V6.4H2ZM5.6 3.4H7.4V6.4H5.6Z" fill="none" stroke="#666" stroke-width=".55"/></svg>
<svg style="left:2.2px;top:193.1px" width="5.2" height="5.2" viewBox="0 0 5 5"><rect x=".25" y=".25" width="4.5" height="4.5" fill="#fff" stroke="#8f959e" stroke-width=".6"/><path d="M1.3 2.5H3.7M2.5 1.3V3.7" stroke="#2f4f9a" stroke-width=".6"/></svg>
<div class="a" style="left:7.4px;top:195.39999999999998px;width:3.5999999999999996px;height:0;border-top:.7px solid #cfcfcf"></div>
<div class="a" style="left:24.3px;top:191.8px">族</div>
<svg style="left:11.4px;top:191.5px" width="9" height="8.4" viewBox="0 0 9 8.4"><rect x=".9" y=".4" width="7" height="7.6" fill="#fff" stroke="#444" stroke-width=".7"/><path d="M2.3 1.8H5V4.2H2.3ZM2.3 6.2H6.6" fill="none" stroke="#555" stroke-width=".6"/></svg>
<svg style="left:2.2px;top:204.3px" width="5.2" height="5.2" viewBox="0 0 5 5"><rect x=".25" y=".25" width="4.5" height="4.5" fill="#fff" stroke="#8f959e" stroke-width=".6"/><path d="M1.3 2.5H3.7M2.5 1.3V3.7" stroke="#2f4f9a" stroke-width=".6"/></svg>
<div class="a" style="left:7.4px;top:206.6px;width:3.5999999999999996px;height:0;border-top:.7px solid #cfcfcf"></div>
<div class="a" style="left:24.3px;top:203.0px">组</div>
<svg style="left:11.4px;top:202.70000000000002px" width="9" height="8.4" viewBox="0 0 9 8.4"><path d="M2 .5H.6V7.9H2M7 .5H8.4V7.9H7" fill="none" stroke="#333" stroke-width=".7"/><circle cx="3.9" cy="3.6" r="1.8" fill="#eee" stroke="#555" stroke-width=".6"/><rect x="4" y="4" width="3" height="2.8" fill="#ddd" stroke="#555" stroke-width=".6"/></svg>
<div class="a" style="left:4.7px;top:217.79999999999998px;width:6.3px;height:0;border-top:.7px solid #cfcfcf"></div>
<div class="a" style="left:24.3px;top:214.2px">Revit 链接</div>
<svg style="left:11.0px;top:215.5px" width="10" height="5" viewBox="0 0 10 5"><ellipse cx="3" cy="2.5" rx="2.3" ry="1.5" fill="none" stroke="#d89a12" stroke-width="1.2"/><ellipse cx="6.8" cy="2.5" rx="2.3" ry="1.5" fill="none" stroke="#e8ad1c" stroke-width="1.2"/></svg>
<div class="a" style="left:147.6px;top:99.1px;width:188.4px;height:9.4px;background:#c5d3e3;border-bottom:1.3px solid #8f959d"></div>
<div class="a" style="left:150px;top:100px;color:#3f4c60">属性</div>
<svg style="left:327px;top:101.6px" width="6" height="6" viewBox="0 0 6 6"><path d="M.6.6L5.2 5.2M5.2.6L.6 5.2" stroke="#111" stroke-width=".9"/></svg>
<div class="a" style="left:148.5px;top:110.6px;width:187.5px;height:40.4px;background:#efefef;border:1px solid #c9c9c9;box-sizing:border-box"></div>
<div class="a" style="left:150.2px;top:112.8px;width:37.4px;height:36.6px;background:#f1f1f1;border:1px solid #dcdcdc;box-sizing:border-box"></div>
<svg style="left:159.5px;top:121px" width="19" height="19" viewBox="0 0 19 19"><rect x=".8" y="1.6" width="10.2" height="16" rx=".6" fill="#c9cdd4" stroke="#5c616b" stroke-width=".8"/><path d="M2.6 2.6V6.6M4.6 2.6V6.6M6.6 2.6V6.6M8.6 2.6V6.6" stroke="#666b75" stroke-width="1"/><path d="M1.6 9.2H7.4M1.6 11.6H7.4M1.6 14H7.4" stroke="#fbfbfc" stroke-width="1.3"/><rect x="11" y="3" width="5.6" height="5.2" fill="#d3d8e2" stroke="#7a808a" stroke-width=".6"/><rect x="7.6" y="8" width="10" height="10.4" rx=".6" fill="#f7f8fa" stroke="#5c616b" stroke-width=".8"/><path d="M9.6 8.4V18M12 8.4V18M14.4 8.4V18M16.6 8.4V18" stroke="#9da3ad" stroke-width="1.1"/></svg>
<div class="a" style="left:189.6px;top:123.4px;color:#444">结构平面</div>
<div class="a" style="left:189.6px;top:133.4px;color:#444">结构梁标高</div>
<svg style="left:329px;top:131px" width="4.4" height="3" viewBox="0 0 4.4 3"><path d="M0 0H4.4L2.2 2.6Z" fill="#333"/></svg>
<div class="btn" style="left:148.5px;top:152.8px;width:139.2px;height:13.5px;border-color:#9d9d9d;background:linear-gradient(#f6f6f6,#e6e6e6 55%,#d6d6d6)"></div>
<div class="a" style="left:151px;top:155.6px">结构平面: 三层梁模板图及梁高分析</div>
<svg style="left:281.5px;top:158.8px" width="4.4" height="3" viewBox="0 0 4.4 3"><path d="M0 0H4.4L2.2 2.6Z" fill="#222"/></svg>
<svg style="left:291px;top:153.8px" width="10" height="9.6" viewBox="0 0 10 9.6"><rect x=".4" y=".5" width="3.7" height="3.3" fill="#f4f5f7" stroke="#7d838d" stroke-width=".6"/><rect x=".4" y="4.7" width="3.7" height="3.9" fill="#f4f5f7" stroke="#7d838d" stroke-width=".6"/><rect x="5" y=".3" width="3.9" height="3.1" fill="#eceef1" stroke="#7d838d" stroke-width=".6"/><rect x="5.2" y="4" width="4.4" height="5.2" fill="#e3e8f0" stroke="#707783" stroke-width=".7"/><rect x="6" y="5.4" width="2.8" height="1.2" fill="#2f74d0"/></svg>
<div class="a" style="left:303.4px;top:154.7px">编辑类型</div>
<div class="a" style="left:148.5px;top:167.2px;width:177.5px;height:413.6px;background:#fff;border-left:1px solid #cfcfcf;box-sizing:border-box"></div>
<div class="a" style="left:326px;top:167.2px;width:9.5px;height:413.6px;background:#f0f0f0"></div>
<div class="a" style="left:326.8px;top:177.6px;width:7px;height:307px;background:linear-gradient(90deg,#f5f5f5,#e2e2e2);border:1px solid #c4c4c4;border-radius:1.5px;box-sizing:border-box"></div>
<svg style="left:328.3px;top:170.6px" width="4" height="3" viewBox="0 0 4 3"><path d="M0 2.6H4L2 .2Z" fill="#555"/></svg>
<svg style="left:328.3px;top:574.6px" width="4" height="3" viewBox="0 0 4 3"><path d="M0 .2H4L2 2.6Z" fill="#555"/></svg>
<svg style="left:328px;top:327px" width="5" height="5" viewBox="0 0 5 5"><path d="M.5 .8H4.5M.5 2.4H4.5M.5 4H4.5" stroke="#999" stroke-width=".5"/></svg>
<div class="sec" style="top:167.20px"></div>
<div class="a" style="left:150px;top:168.90px;color:#111">图形</div>
<svg style="left:317.8px;top:169.80px" width="4" height="5" viewBox="0 0 4 5"><path d="M.4 2.2L2 .6L3.6 2.2M.4 4.4L2 2.8L3.6 4.4" fill="none" stroke="#222" stroke-width=".7"/></svg>
<div class="row" style="top:178.45px;height:11.25px;overflow:hidden"><div class="a" style="left:84.3px;top:0;width:0;height:12px;border-left:1px solid #e0e0e0"></div><div class="a" style="left:169px;top:0;width:0;height:12px;border-left:1px solid #e0e0e0"></div><div class="a" style="left:5.4px;top:1.7px">视图比例</div></div>
<div class="a" style="left:233.6px;top:177.95px;width:84.6px;height:11.2px;border:1px solid #333;box-sizing:border-box;background:#fff"></div>
<div class="a" style="left:237px;top:180.15px">1 : 100</div>
<div class="row" style="top:189.70px;height:11.25px;overflow:hidden"><div class="a" style="left:84.3px;top:0;width:0;height:12px;border-left:1px solid #e0e0e0"></div><div class="a" style="left:169px;top:0;width:0;height:12px;border-left:1px solid #e0e0e0"></div><div class="a g" style="left:5.4px;top:1.7px">比例值 1:</div><div class="a g" style="left:86.2px;top:1.7px">100</div></div>
<div class="row" style="top:200.95px;height:11.25px;overflow:hidden"><div class="a" style="left:84.3px;top:0;width:0;height:12px;border-left:1px solid #e0e0e0"></div><div class="a" style="left:169px;top:0;width:0;height:12px;border-left:1px solid #e0e0e0"></div><div class="a" style="left:5.4px;top:1.7px">显示模型</div><div class="a" style="left:86.2px;top:1.7px">标准</div></div>
<div class="row" style="top:212.20px;height:11.25px;overflow:hidden"><div class="a" style="left:84.3px;top:0;width:0;height:12px;border-left:1px solid #e0e0e0"></div><div class="a" style="left:169px;top:0;width:0;height:12px;border-left:1px solid #e0e0e0"></div><div class="a" style="left:5.4px;top:1.7px">详细程度</div><div class="a" style="left:86.2px;top:1.7px">精细</div></div>
<div class="row" style="top:223.45px;height:11.25px;overflow:hidden"><div class="a" style="left:84.3px;top:0;width:0;height:12px;border-left:1px solid #e0e0e0"></div><div class="a" style="left:169px;top:0;width:0;height:12px;border-left:1px solid #e0e0e0"></div><div class="a" style="left:5.4px;top:1.7px">零件可见性</div><div class="a" style="left:86.2px;top:1.7px">显示原状态</div></div>
<div class="row" style="top:234.70px;height:11.25px;overflow:hidden"><div class="a" style="left:84.3px;top:0;width:0;height:12px;border-left:1px solid #e0e0e0"></div><div class="a" style="left:169px;top:0;width:0;height:12px;border-left:1px solid #e0e0e0"></div><div class="a" style="left:5.4px;top:1.7px">详图编号</div><div class="a" style="left:86.2px;top:1.7px">1</div></div>
<div class="row" style="top:245.95px;height:11.25px;overflow:hidden"><div class="a" style="left:84.3px;top:0;width:0;height:12px;border-left:1px solid #e0e0e0"></div><div class="a" style="left:169px;top:0;width:0;height:12px;border-left:1px solid #e0e0e0"></div><div class="a" style="left:5.4px;top:1.7px">在图纸上旋转</div><div class="a" style="left:86.2px;top:1.7px">无</div></div>
<div class="row" style="top:257.20px;height:11.25px;overflow:hidden"><div class="a" style="left:84.3px;top:0;width:0;height:12px;border-left:1px solid #e0e0e0"></div><div class="a" style="left:169px;top:0;width:0;height:12px;border-left:1px solid #e0e0e0"></div><div class="a" style="left:5.4px;top:1.7px">可见性/图形替换</div></div>
<div class="btn" style="left:234.4px;top:257.80px;width:83.4px;height:10px"></div>
<div class="c" style="left:276px;top:258.80px;color:#111">编辑...</div>
<div class="row" style="top:268.45px;height:11.25px;overflow:hidden"><div class="a" style="left:84.3px;top:0;width:0;height:12px;border-left:1px solid #e0e0e0"></div><div class="a" style="left:169px;top:0;width:0;height:12px;border-left:1px solid #e0e0e0"></div><div class="a" style="left:5.4px;top:1.7px">图形显示选项</div></div>
<div class="btn" style="left:234.4px;top:269.05px;width:83.4px;height:10px"></div>
<div class="c" style="left:276px;top:270.05px;color:#111">编辑...</div>
<div class="row" style="top:279.70px;height:11.25px;overflow:hidden"><div class="a" style="left:84.3px;top:0;width:0;height:12px;border-left:1px solid #e0e0e0"></div><div class="a" style="left:169px;top:0;width:0;height:12px;border-left:1px solid #e0e0e0"></div><div class="a" style="left:5.4px;top:1.7px">方向</div><div class="a" style="left:86.2px;top:1.7px">项目北</div></div>
<div class="row" style="top:290.95px;height:11.25px;overflow:hidden"><div class="a" style="left:84.3px;top:0;width:0;height:12px;border-left:1px solid #e0e0e0"></div><div class="a" style="left:169px;top:0;width:0;height:12px;border-left:1px solid #e0e0e0"></div><div class="a g" style="left:5.4px;top:1.7px">墙连接显示</div><div class="a g" style="left:86.2px;top:1.7px">清理所有墙连接</div></div>
<div class="row" style="top:302.20px;height:11.25px;overflow:hidden"><div class="a" style="left:84.3px;top:0;width:0;height:12px;border-left:1px solid #e0e0e0"></div><div class="a" style="left:169px;top:0;width:0;height:12px;border-left:1px solid #e0e0e0"></div><div class="a" style="left:5.4px;top:1.7px">规程</div><div class="a" style="left:86.2px;top:1.7px">结构</div></div>
<div class="row" style="top:313.45px;height:11.25px;overflow:hidden"><div class="a" style="left:84.3px;top:0;width:0;height:12px;border-left:1px solid #e0e0e0"></div><div class="a" style="left:169px;top:0;width:0;height:12px;border-left:1px solid #e0e0e0"></div><div class="a" style="left:5.4px;top:1.7px">显示隐藏线</div><div class="a" style="left:86.2px;top:1.7px">按规程</div></div>
<div class="row" style="top:324.70px;height:11.25px;overflow:hidden"><div class="a" style="left:84.3px;top:0;width:0;height:12px;border-left:1px solid #e0e0e0"></div><div class="a" style="left:169px;top:0;width:0;height:12px;border-left:1px solid #e0e0e0"></div><div class="a" style="left:5.4px;top:1.7px">颜色方案位置</div><div class="a" style="left:86.2px;top:1.7px">背景</div></div>
<div class="row" style="top:335.95px;height:11.25px;overflow:hidden"><div class="a" style="left:84.3px;top:0;width:0;height:12px;border-left:1px solid #e0e0e0"></div><div class="a" style="left:169px;top:0;width:0;height:12px;border-left:1px solid #e0e0e0"></div><div class="a" style="left:5.4px;top:1.7px">颜色方案</div></div>
<div class="btn" style="left:234.4px;top:336.55px;width:83.4px;height:10px"></div>
<div class="c" style="left:276px;top:337.55px;color:#111">&lt;无&gt;</div>
<div class="row" style="top:347.20px;height:11.25px;overflow:hidden"><div class="a" style="left:84.3px;top:0;width:0;height:12px;border-left:1px solid #e0e0e0"></div><div class="a" style="left:169px;top:0;width:0;height:12px;border-left:1px solid #e0e0e0"></div><div class="a" style="left:5.4px;top:1.7px">系统颜色方案</div></div>
<div class="btn" style="left:234.4px;top:347.80px;width:83.4px;height:10px"></div>
<div class="c" style="left:276px;top:348.80px;color:#111">编辑...</div>
<div class="row" style="top:358.45px;height:11.25px;overflow:hidden"><div class="a" style="left:84.3px;top:0;width:0;height:12px;border-left:1px solid #e0e0e0"></div><div class="a" style="left:169px;top:0;width:0;height:12px;border-left:1px solid #e0e0e0"></div><div class="a" style="left:5.4px;top:1.7px">默认分析显示样式</div><div class="a" style="left:86.2px;top:1.7px">无</div></div>
<div class="row" style="top:369.70px;height:11.25px;overflow:hidden"><div class="a" style="left:84.3px;top:0;width:0;height:12px;border-left:1px solid #e0e0e0"></div><div class="a" style="left:169px;top:0;width:0;height:12px;border-left:1px solid #e0e0e0"></div><div class="a" style="left:5.4px;top:1.7px">子规程</div><div class="a" style="left:86.2px;top:1.7px">S1-梁平面</div></div>
<div class="a" style="left:319px;top:369.90px;width:5.4px;height:10.6px;border:1px solid #888;border-radius:1.5px;box-sizing:border-box;background:linear-gradient(90deg,#fafafa,#dcdcdc)"></div>
<div class="row" style="top:380.95px;height:11.25px;overflow:hidden"><div class="a" style="left:84.3px;top:0;width:0;height:12px;border-left:1px solid #e0e0e0"></div><div class="a" style="left:169px;top:0;width:0;height:12px;border-left:1px solid #e0e0e0"></div><div class="a" style="left:5.4px;top:1.7px">日光路径</div></div>
<svg style="left:235.2px;top:383.15px" width="6.6" height="6.6" viewBox="0 0 6.6 6.6"><rect x=".3" y=".3" width="6" height="6" fill="#f4f4f4" stroke="#9aa0a8" stroke-width=".6"/></svg>
<div class="sec" style="top:392.20px"></div>
<div class="a" style="left:150px;top:393.90px;color:#111">基线</div>
<svg style="left:317.8px;top:394.80px" width="4" height="5" viewBox="0 0 4 5"><path d="M.4 2.2L2 .6L3.6 2.2M.4 4.4L2 2.8L3.6 4.4" fill="none" stroke="#222" stroke-width=".7"/></svg>
<div class="row" style="top:403.45px;height:11.25px;overflow:hidden"><div class="a" style="left:84.3px;top:0;width:0;height:12px;border-left:1px solid #e0e0e0"></div><div class="a" style="left:169px;top:0;width:0;height:12px;border-left:1px solid #e0e0e0"></div><div class="a" style="left:5.4px;top:1.7px">范围: 底部标高</div><div class="a" style="left:86.2px;top:1.7px">无</div></div>
<div class="row" style="top:414.70px;height:11.25px;overflow:hidden"><div class="a" style="left:84.3px;top:0;width:0;height:12px;border-left:1px solid #e0e0e0"></div><div class="a" style="left:169px;top:0;width:0;height:12px;border-left:1px solid #e0e0e0"></div><div class="a g" style="left:5.4px;top:1.7px">范围: 顶部标高</div><div class="a g" style="left:86.2px;top:1.7px">无边界</div></div>
<div class="row" style="top:425.95px;height:11.25px;overflow:hidden"><div class="a" style="left:84.3px;top:0;width:0;height:12px;border-left:1px solid #e0e0e0"></div><div class="a" style="left:169px;top:0;width:0;height:12px;border-left:1px solid #e0e0e0"></div><div class="a g" style="left:5.4px;top:1.7px">基线方向</div><div class="a g" style="left:86.2px;top:1.7px">俯视</div></div>
<div class="sec" style="top:437.20px"></div>
<div class="a" style="left:150px;top:438.90px;color:#111">范围</div>
<svg style="left:317.8px;top:439.80px" width="4" height="5" viewBox="0 0 4 5"><path d="M.4 2.2L2 .6L3.6 2.2M.4 4.4L2 2.8L3.6 4.4" fill="none" stroke="#222" stroke-width=".7"/></svg>
<div class="row" style="top:448.45px;height:11.25px;overflow:hidden"><div class="a" style="left:84.3px;top:0;width:0;height:12px;border-left:1px solid #e0e0e0"></div><div class="a" style="left:169px;top:0;width:0;height:12px;border-left:1px solid #e0e0e0"></div><div class="a" style="left:5.4px;top:1.7px">裁剪视图</div></div>
<svg style="left:235.2px;top:450.65px" width="6.6" height="6.6" viewBox="0 0 6.6 6.6"><rect x=".3" y=".3" width="6" height="6" fill="#f4f4f4" stroke="#9aa0a8" stroke-width=".6"/><path d="M1.6 3.2L2.8 4.6L5 1.6" fill="none" stroke="#2b3f8c" stroke-width=".9"/></svg>
<div class="row" style="top:459.70px;height:11.25px;overflow:hidden"><div class="a" style="left:84.3px;top:0;width:0;height:12px;border-left:1px solid #e0e0e0"></div><div class="a" style="left:169px;top:0;width:0;height:12px;border-left:1px solid #e0e0e0"></div><div class="a" style="left:5.4px;top:1.7px">裁剪区域可见</div></div>
<svg style="left:235.2px;top:461.90px" width="6.6" height="6.6" viewBox="0 0 6.6 6.6"><rect x=".3" y=".3" width="6" height="6" fill="#f4f4f4" stroke="#9aa0a8" stroke-width=".6"/></svg>
<div class="row" style="top:470.95px;height:11.25px;overflow:hidden"><div class="a" style="left:84.3px;top:0;width:0;height:12px;border-left:1px solid #e0e0e0"></div><div class="a" style="left:169px;top:0;width:0;height:12px;border-left:1px solid #e0e0e0"></div><div class="a" style="left:5.4px;top:1.7px">注释裁剪</div></div>
<svg style="left:235.2px;top:473.15px" width="6.6" height="6.6" viewBox="0 0 6.6 6.6"><rect x=".3" y=".3" width="6" height="6" fill="#f4f4f4" stroke="#9aa0a8" stroke-width=".6"/></svg>
<div class="row" style="top:482.20px;height:11.25px;overflow:hidden"><div class="a" style="left:84.3px;top:0;width:0;height:12px;border-left:1px solid #e0e0e0"></div><div class="a" style="left:169px;top:0;width:0;height:12px;border-left:1px solid #e0e0e0"></div><div class="a" style="left:5.4px;top:1.7px">视图范围</div></div>
<div class="btn" style="left:234.4px;top:482.80px;width:83.4px;height:10px"></div>
<div class="c" style="left:276px;top:483.80px;color:#111">编辑...</div>
<div class="row" style="top:493.45px;height:11.25px;overflow:hidden"><div class="a" style="left:84.3px;top:0;width:0;height:12px;border-left:1px solid #e0e0e0"></div><div class="a" style="left:169px;top:0;width:0;height:12px;border-left:1px solid #e0e0e0"></div><div class="a g" style="left:5.4px;top:1.7px">相关标高</div><div class="a g" style="left:86.2px;top:1.7px">3F_STR(11.400)</div></div>
<div class="row" style="top:504.70px;height:11.25px;overflow:hidden"><div class="a" style="left:84.3px;top:0;width:0;height:12px;border-left:1px solid #e0e0e0"></div><div class="a" style="left:169px;top:0;width:0;height:12px;border-left:1px solid #e0e0e0"></div><div class="a" style="left:5.4px;top:1.7px">范围框</div><div class="a" style="left:86.2px;top:1.7px">无</div></div>
<div class="row" style="top:515.95px;height:11.25px;overflow:hidden"><div class="a" style="left:84.3px;top:0;width:0;height:12px;border-left:1px solid #e0e0e0"></div><div class="a" style="left:169px;top:0;width:0;height:12px;border-left:1px solid #e0e0e0"></div><div class="a" style="left:5.4px;top:1.7px">柱符号偏移</div><div class="a" style="left:86.2px;top:1.7px">304.8</div></div>
<div class="row" style="top:527.20px;height:11.25px;overflow:hidden"><div class="a" style="left:84.3px;top:0;width:0;height:12px;border-left:1px solid #e0e0e0"></div><div class="a" style="left:169px;top:0;width:0;height:12px;border-left:1px solid #e0e0e0"></div><div class="a" style="left:5.4px;top:1.7px">截剪裁</div></div>
<div class="btn" style="left:234.4px;top:527.80px;width:83.4px;height:10px"></div>
<div class="c" style="left:276px;top:528.80px;color:#111">不剪裁</div>
<div class="sec" style="top:538.45px"></div>
<div class="a" style="left:150px;top:540.15px;color:#111">标识数据</div>
<svg style="left:317.8px;top:541.05px" width="4" height="5" viewBox="0 0 4 5"><path d="M.4 2.2L2 .6L3.6 2.2M.4 4.4L2 2.8L3.6 4.4" fill="none" stroke="#222" stroke-width=".7"/></svg>
<div class="row" style="top:549.70px;height:11.25px;overflow:hidden"><div class="a" style="left:84.3px;top:0;width:0;height:12px;border-left:1px solid #e0e0e0"></div><div class="a" style="left:169px;top:0;width:0;height:12px;border-left:1px solid #e0e0e0"></div><div class="a" style="left:5.4px;top:1.7px">视图样板</div></div>
<div class="btn" style="left:234.4px;top:550.30px;width:83.4px;height:10px"></div>
<div class="c" style="left:276px;top:551.30px;color:#111">&lt;无&gt;</div>
<div class="row" style="top:560.95px;height:11.25px;overflow:hidden"><div class="a" style="left:84.3px;top:0;width:0;height:12px;border-left:1px solid #e0e0e0"></div><div class="a" style="left:169px;top:0;width:0;height:12px;border-left:1px solid #e0e0e0"></div><div class="a" style="left:5.4px;top:1.7px">视图名称</div><div class="a" style="left:86.2px;top:1.7px">三层梁模板图及梁高分析</div></div>
<div class="row" style="top:572.20px;height:8.60px;overflow:hidden"><div class="a" style="left:84.3px;top:0;width:0;height:12px;border-left:1px solid #e0e0e0"></div><div class="a" style="left:169px;top:0;width:0;height:12px;border-left:1px solid #e0e0e0"></div><div class="a g" style="left:5.4px;top:1.7px">相关性</div><div class="a g" style="left:86.2px;top:1.7px">不相关</div></div>
<div class="a" style="left:150px;top:582.6px;color:#1a54c4;text-decoration:underline">属性帮助</div>
<div class="a" style="left:293px;top:582px;width:40px;height:10px;border:1px solid #d0d0d0;border-radius:1.5px;box-sizing:border-box;background:#f4f4f4"></div>
<div class="c" style="left:313px;top:583px;color:#9a9a9a">应用</div>
<!--CANVAS-->
<svg id="cv" style="left:338px;top:98px" width="738" height="486" viewBox="338 98 738 486">
<defs><clipPath id="cvc"><rect x="339" y="100.1" width="728.9" height="483.6"/></clipPath></defs>
<rect x="338" y="98.2" width="738" height="1.2" fill="#fcfcfc"/>
<rect x="338" y="99.2" width="1" height="485" fill="#fff"/>
<rect x="339" y="99.2" width="730" height="2" fill="#707070"/>
<rect x="1067" y="99.2" width="1.8" height="484.5" fill="#9a9a9a"/>
<rect x="339" y="100.1" width="728.9" height="483.6" fill="#000"/>
<g clip-path="url(#cvc)">
<g fill="#ffff00">
<rect x="444.2" y="100" width="12.5" height="442"/>
<rect x="703.4" y="100" width="12.1" height="442"/>
<rect x="832.8" y="100" width="12.0" height="442"/>
<rect x="566" y="100" width="14.5" height="30"/>
<rect x="961.4" y="167" width="14.2" height="352"/>
<rect x="339" y="152.6" width="729" height="14.4"/>
<rect x="339" y="541.6" width="729" height="14.4"/>
</g>
<g fill="#ff0000"><rect x="573.2" y="167" width="14" height="352"/><rect x="973" y="100" width="14.3" height="30"/></g>
<path d="M587.4 167V518" stroke="#9a9a9a" stroke-width=".5"/>
<path d="M968.6 100V130M580.4 556V563" stroke="#6a6a6a" stroke-width=".7"/>
<g stroke="#ff0000" stroke-width="1" fill="none">
<path d="M339 152.5H1068M339 541.5H1068" stroke="#98a6a6" stroke-width="1"/>
<path d="M339 152.5H1068" stroke-dasharray="60.4 13.7 3 14.6" stroke-dashoffset="30.7"/>
<path d="M339 541.5H1068" stroke-dasharray="60.4 13.7 3 14.6" stroke-dashoffset="30.7"/>
<path d="M580.4 100V583" stroke-dasharray="60.4 13.7 3 14.6" stroke-dashoffset="58.4" stroke-width=".8"/>
<path d="M968.6 100V583" stroke-dasharray="60.4 13.7 3 14.6" stroke-dashoffset="58.4" stroke-width=".8"/>
</g>
<g fill="#808080" stroke="#0000ff" stroke-width="1">
<rect x="566" y="130" width="37.5" height="36.8"/>
<rect x="949.5" y="130" width="37.5" height="36.8"/>
<rect x="566" y="518.6" width="37.5" height="37"/>
<rect x="949.5" y="518.6" width="37.5" height="37"/>
</g>
<g stroke="#ff2020" stroke-width=".8" fill="none">
<path d="M580.4 133V167M567 152.6H569.4M584 152.6H603.4"/>
<path d="M968.6 133V167M951 152.6H986.6"/>
<path d="M580.4 519V556M567 541.6H569.4M584 541.6H603.4"/>
<path d="M968.6 519V556M951 541.6H986.6"/>
</g>
<path d="M339 567.5H1068" stroke="#a85000" stroke-width="1"/>
<text class="cad" transform="translate(573 212.7) rotate(-90)" font-size="18" fill="#00b2f2" word-spacing="4.9" textLength="33.7" lengthAdjust="spacingAndGlyphs">4Φ25</text>
<text class="cad" transform="translate(703 209.6) rotate(-90)" font-size="18" fill="#00b2f2" word-spacing="4.9" textLength="34.4" lengthAdjust="spacingAndGlyphs">3Φ20</text>
<text class="cad" transform="translate(528 335.7) rotate(-90)" font-size="20" fill="#00b2f2" word-spacing="5.4" textLength="44.7" lengthAdjust="spacingAndGlyphs">KL14(2)</text>
<text class="cad" transform="translate(541.5 335.7) rotate(-90)" font-size="18" fill="#00b2f2" word-spacing="4.9" textLength="47.7" lengthAdjust="spacingAndGlyphs">300X700</text>
<text class="cad" transform="translate(557.5 335.7) rotate(-90)" font-size="18" fill="#00b2f2" word-spacing="4.9" textLength="76" lengthAdjust="spacingAndGlyphs">2Φ25;5Φ20</text>
<text class="cad" transform="translate(573 512.2) rotate(-90)" font-size="18" fill="#00b2f2" word-spacing="4.9" textLength="62" lengthAdjust="spacingAndGlyphs">5Φ25 3/2</text>
<text class="cad" transform="translate(703.3 535.3) rotate(-90)" font-size="18" fill="#00b2f2" word-spacing="4.9" textLength="33.5" lengthAdjust="spacingAndGlyphs">2Φ20</text>
<text class="cad" transform="translate(733 371.6) rotate(-90)" font-size="18" fill="#00b2f2" word-spacing="4.9" textLength="44.7" lengthAdjust="spacingAndGlyphs">KL13(2)</text>
<text class="cad" transform="translate(747.5 371.6) rotate(-90)" font-size="18" fill="#00b2f2" word-spacing="4.9" textLength="47.8" lengthAdjust="spacingAndGlyphs">250X600</text>
<text class="cad" transform="translate(763.4 368.6) rotate(-90)" font-size="18" fill="#00b2f2" word-spacing="4.9" textLength="86.6" lengthAdjust="spacingAndGlyphs">(2Φ12);5Φ20</text>
<text class="cad" transform="translate(865.6 376) rotate(-90)" font-size="18" fill="#00b2f2" word-spacing="4.9" textLength="44.7" lengthAdjust="spacingAndGlyphs">KL13(2)</text>
<text class="cad" transform="translate(947.2 340.2) rotate(-90)" font-size="20" fill="#00b2f2" word-spacing="5.4" textLength="44.7" lengthAdjust="spacingAndGlyphs">KL14(2)</text>
<path d="M515 339.5H573M715.5 375H766.7M845 380.3H871M934.3 343.3H961.4M934.5 340V343.5M854 375V380.5M721 370V375" stroke="#00b2f2" stroke-width="0.8" fill="none"/>
<text class="cad" x="612.8" y="149.4" font-size="19.5" fill="#c6ea00" word-spacing="5.3" textLength="61.2" lengthAdjust="spacingAndGlyphs">7Φ25 4/3</text>
<text class="cad" x="996.6" y="150" font-size="19.5" fill="#c6ea00" word-spacing="5.3" textLength="60.6" lengthAdjust="spacingAndGlyphs">7Φ25 4/3</text>
<text class="cad" x="606" y="537" font-size="19.5" fill="#c6ea00" word-spacing="5.3" textLength="61.7" lengthAdjust="spacingAndGlyphs">5Φ25 3/2</text>
<text class="cad" x="989.7" y="537.2" font-size="19.5" fill="#c6ea00" word-spacing="5.3" textLength="61.3" lengthAdjust="spacingAndGlyphs">5Φ25 3/2</text>
<text class="cad" x="347.8" y="469.6" font-size="18" fill="#c6ea00" word-spacing="4.9" textLength="39" lengthAdjust="spacingAndGlyphs">KL6(7)</text>
<text class="cad" x="347.8" y="484.4" font-size="18" fill="#c6ea00" word-spacing="4.9" textLength="47.7" lengthAdjust="spacingAndGlyphs">300X700</text>
<text class="cad" x="347.8" y="498.6" font-size="18" fill="#c6ea00" word-spacing="4.9" textLength="62" lengthAdjust="spacingAndGlyphs">2„25;5„22</text>
<text class="cad" x="349.8" y="512.6" font-size="18" fill="#c6ea00" word-spacing="4.9" textLength="72" lengthAdjust="spacingAndGlyphs">Φ10@100(2)</text>
<text class="cad" x="347.8" y="526.8" font-size="18" fill="#c6ea00" word-spacing="4.9" textLength="41" lengthAdjust="spacingAndGlyphs">N6Φ12</text>
<path d="M344.5 457V541" stroke="#c6ea00" stroke-width="0.8" fill="none"/>
<text class="lbl" x="366.6" y="185.6" font-size="16" fill="#ffffff" word-spacing="4.3" textLength="42.6" lengthAdjust="spacingAndGlyphs">300x700</text>
<text class="lbl" x="366.6" y="574.2" font-size="16" fill="#ffffff" word-spacing="4.3" textLength="42.6" lengthAdjust="spacingAndGlyphs">300x700</text>
<text class="lbl" x="754.2" y="185.6" font-size="16" fill="#ffffff" word-spacing="4.3" textLength="42.6" lengthAdjust="spacingAndGlyphs">300x700</text>
<text class="lbl" x="754.2" y="574.2" font-size="16" fill="#ffffff" word-spacing="4.3" textLength="42.6" lengthAdjust="spacingAndGlyphs">300x700</text>
<text class="lbl" transform="translate(350 375) rotate(-90)" font-size="16" fill="#ffffff" word-spacing="4.3" textLength="42" lengthAdjust="spacingAndGlyphs">250x600</text>
<text class="lbl" transform="translate(478 375) rotate(-90)" font-size="16" fill="#ffffff" word-spacing="4.3" textLength="42" lengthAdjust="spacingAndGlyphs">250x600</text>
<text class="lbl" transform="translate(736.8 375) rotate(-90)" font-size="16" fill="#ffffff" word-spacing="4.3" textLength="42" lengthAdjust="spacingAndGlyphs">250x600</text>
<text class="lbl" transform="translate(866.2 375) rotate(-90)" font-size="16" fill="#ffffff" word-spacing="4.3" textLength="42" lengthAdjust="spacingAndGlyphs">250x600</text>
<text class="lbl" transform="translate(606.2 364.2) rotate(-90)" font-size="16" fill="#ffffff" word-spacing="4.3" textLength="42.4" lengthAdjust="spacingAndGlyphs">300x700</text>
<text class="lbl" transform="translate(994.6 364.2) rotate(-90)" font-size="16" fill="#ffffff" word-spacing="4.3" textLength="42.4" lengthAdjust="spacingAndGlyphs">300x700</text>
</g>
</svg>
<!--BOTTOM-->
<div class="a" style="left:1068.8px;top:99.2px;width:14px;height:484.5px;background:#f1f1f1"></div>
<svg style="left:1071.6px;top:103px" width="4" height="3" viewBox="0 0 4 3"><path d="M0 2.6H4L2 .2Z" fill="#555"/></svg>
<svg style="left:1071.6px;top:577.2px" width="4" height="3" viewBox="0 0 4 3"><path d="M0 .2H4L2 2.6Z" fill="#555"/></svg>
<div class="a" style="left:1068.9px;top:337.6px;width:13px;height:7.8px;box-sizing:border-box;border:1px solid #c4c4c4;border-radius:1.2px;background:linear-gradient(90deg,#fbfbfb 30%,#d2d2d2)"></div>
<svg style="left:1039px;top:104px" width="28" height="8" viewBox="0 0 28 8"><rect x=".8" y="4.2" width="6.4" height="2" fill="#e2e2e2"/><rect x="12.2" y="1" width="4.7" height="4.4" fill="#bdbdbd" stroke="#e6e6e6" stroke-width=".7"/><rect x="10.8" y="2.5" width="4.7" height="4.4" fill="#c9c9c9" stroke="#f0f0f0" stroke-width=".7"/><rect x="12.6" y="4" width="1.2" height="1.6" fill="#222"/><path d="M21.6 1.6L26.6 6.8M26.6 1.6L21.6 6.8" stroke="#f2f2f2" stroke-width="1.6"/></svg>
<div class="a" style="left:338px;top:583.7px;width:744px;height:10.1px;background:#f4f4f4"></div>
<div class="a" style="left:520px;top:583.7px;width:548px;height:10.1px;background:#ededed"></div>
<div class="a" style="left:338.4px;top:583.7px;width:1px;height:10.1px;background:#fff"></div>
<div class="a" style="left:786.4px;top:584.3px;width:8.6px;height:8.6px;box-sizing:border-box;border:1px solid #b2b2b2;border-radius:1.2px;background:linear-gradient(#f4f4f4,#dadada)"></div>
<svg style="left:516px;top:586.4px" width="2.6" height="4" viewBox="0 0 2.6 4"><path d="M2.4 .2V3.8L.2 2Z" fill="#444"/></svg>
<svg style="left:1062.6px;top:586.4px" width="2.6" height="4" viewBox="0 0 2.6 4"><path d="M.2 .2V3.8L2.4 2Z" fill="#444"/></svg>
<svg style="left:1070px;top:587px" width="6" height="6" viewBox="0 0 6 6"><path d="M5 1V2M5 3V4M3 3V4M5 5V5.6M3 5V5.6M1 5V5.6" stroke="#aaa" stroke-width="1"/></svg>
<div class="a" style="left:351px;top:585.2px;color:#222;word-spacing:1.5px">1 : 100</div>
<svg style="left:384px;top:584.6px" width="9" height="8" viewBox="0 0 9 8"><rect x=".4" y=".8" width="8" height="6" fill="#cfcfcf" stroke="#444" stroke-width=".7"/><path d="M.4 2.8H8.4M.4 4.8H8.4M2.4 .8V6.8M4.4 .8V6.8M6.4 .8V6.8" stroke="#777" stroke-width=".4"/></svg>
<svg style="left:396px;top:584.8px" width="9.4" height="8" viewBox="0 0 9.4 8"><path d="M.5 2.6H6.6V7.4H.5ZM.5 2.6L2.6 .6H8.8L6.6 2.6M8.8 .6V5.2L6.6 7.4" fill="#f6f6f6" stroke="#333" stroke-width=".7" stroke-linejoin="round"/></svg>
<svg style="left:407.4px;top:584.4px" width="9" height="9" viewBox="0 0 9 9"><circle cx="3.6" cy="3.6" r="2.3" fill="#ffd24a" stroke="#e08a10" stroke-width=".8"/><path d="M3.6 .2V1M.2 3.6H1M6.2 1L5.6 1.6M1 1L1.6 1.6" stroke="#e08a10" stroke-width=".6"/><path d="M4.6 5L8.2 8.4M8.2 5L4.6 8.4" stroke="#dc1e1e" stroke-width="1.1"/></svg>
<svg style="left:419.8px;top:584.4px" width="9" height="9" viewBox="0 0 9 9"><circle cx="3.4" cy="3.4" r="2.4" fill="#e8f1fb" stroke="#2a6fc4" stroke-width=".9"/><path d="M1 7.8H4" stroke="#2a6fc4" stroke-width=".8"/><path d="M4.6 5L8.2 8.4M8.2 5L4.6 8.4" stroke="#dc1e1e" stroke-width="1.1"/></svg>
<svg style="left:430.6px;top:584.8px" width="9" height="8.6" viewBox="0 0 9 8.6"><path d="M.2 4.4H2M1 7.6V6" fill="none" stroke="#4a4a4a" stroke-width=".7"/><rect x="2" y="2.4" width="5.2" height="4.6" fill="#2f74cc"/><path d="M4.4 1.2H8.4V4" fill="none" stroke="#2f74cc" stroke-width="1"/><path d="M4.6 3.4H6.6V5H4.6Z" fill="#d8433a"/></svg>
<svg style="left:442.2px;top:584.8px" width="9.4" height="8.6" viewBox="0 0 9.4 8.6"><path d="M.2 4.4H2M1 7.6V6" fill="none" stroke="#4a4a4a" stroke-width=".7"/><rect x="2" y="2.4" width="4.6" height="4.6" fill="#2f74cc"/><circle cx="7.2" cy="3.4" r="1.7" fill="#e9f2fc" stroke="#5a94d8" stroke-width=".6"/><path d="M7.2 5.2V7.4" stroke="#5a94d8" stroke-width=".7"/></svg>
<svg style="left:454.4px;top:585.4px" width="9" height="7" viewBox="0 0 9 7"><circle cx="2.6" cy="3.4" r="1.8" fill="#f2f2f2" stroke="#444" stroke-width=".7"/><circle cx="6.6" cy="3.8" r="1.8" fill="#f2f2f2" stroke="#444" stroke-width=".7"/><path d="M.4 1.2L2 2M4.2 3.2H5" stroke="#444" stroke-width=".6"/></svg>
<svg style="left:468px;top:585.0px" width="4" height="7.4" viewBox="0 0 4 7.4"><circle cx="2" cy="2.4" r="1.7" fill="#e4f0fc" stroke="#2a7fd8" stroke-width=".8"/><path d="M1.4 4.6H2.6V6H1.4Z" fill="#2a7fd8"/></svg>
<svg style="left:477.4px;top:584.8px" width="9.4" height="8.4" viewBox="0 0 9.4 8.4"><path d="M.5 1H5.6V6.8H.5Z" fill="none" stroke="#333" stroke-width=".8"/><circle cx="6" cy="4.4" r="1.8" fill="#f4f4f4" stroke="#333" stroke-width=".7"/><path d="M7.2 5.8L8.8 7.6" stroke="#333" stroke-width=".9"/></svg>
<svg style="left:489.2px;top:584.6px" width="9.6" height="8.6" viewBox="0 0 9.6 8.6"><path d="M.5 7.6V3.4C.5 1.6 1.6 .8 3 .8H5C6.4 .8 7.4 1.6 7.4 3.4V7.6" fill="#f0f0f0" stroke="#444" stroke-width=".8"/><path d="M2 2.4V7.6M3.8 2.4V7.6M5.6 2.4V7.6" stroke="#b33" stroke-width=".6"/><circle cx="7.4" cy="4.6" r="1.7" fill="#e4f0fc" stroke="#2a7fd8" stroke-width=".6"/></svg>
<svg style="left:500.8px;top:584.6px" width="10.4" height="8.6" viewBox="0 0 10.4 8.6"><path d="M.6 .4V8.4M.6 1.2H9.6" fill="none" stroke="#333" stroke-width=".8" stroke-dasharray="1.6 .8"/><path d="M4.6 7.4V4.6H9V7.4ZM5.6 4.6C5.6 3 8 3 8 4.6" fill="#e9e9e9" stroke="#444" stroke-width=".7"/></svg>
<div class="a" style="left:-6px;top:593.8px;width:1088px;height:16px;background:#d3d3d3"></div>
<div class="a" style="left:-1px;top:598.3px;color:#1c1c1c;letter-spacing:.1px">单击可进行选择;</div>
<div class="a" style="left:52px;top:598.3px;color:#1c1c1c;letter-spacing:.1px">按 Tab 键并单击可选择其他项目;</div>
<div class="a" style="left:154px;top:598.3px;color:#1c1c1c;letter-spacing:.1px">按 Ctrl 键并单击可将新项目添加到选择集;</div>
<div class="a" style="left:281px;top:598.3px;color:#1c1c1c;letter-spacing:.1px">按 Shift 键并单击可取消选择。</div>
<svg style="left:534px;top:598.2px" width="8.4" height="5" viewBox="0 0 8.4 5"><path d="M1 5L3.4 .8L5 3L7.6 2.2" fill="none" stroke="#666" stroke-width=".8"/><circle cx="3.6" cy="1.4" r="1" fill="#888"/></svg>
<div class="a" style="left:547px;top:597.2px;width:113.6px;height:8px;box-sizing:border-box;border:1px solid #bdbdbd;background:#fff"></div>
<svg style="left:656.2px;top:600.4px" width="2.8" height="1.8" viewBox="0 0 2.8 1.8"><path d="M0 0H2.8L1.4 1.8Z" fill="#555"/></svg>
<svg style="left:668.4px;top:598.4px" width="7" height="5" viewBox="0 0 7 5"><path d="M.4 .6H6V4.8" fill="none" stroke="#666" stroke-width=".8"/><path d="M1 2.4L3 4.6L5 2.4" fill="none" stroke="#888" stroke-width=".7"/></svg>
<div class="a" style="left:679.4px;top:597.8px;color:#222">:0</div>
<svg style="left:695.4px;top:598px" width="11" height="6" viewBox="0 0 11 6"><rect x=".4" y=".4" width="10" height="6" fill="#e8eef6" stroke="#2b3a55" stroke-width=".9"/><rect x=".4" y=".4" width="10" height="1.6" fill="#2b3a55"/><path d="M2 3.6H8.6V6H2Z" fill="#fff" stroke="#556" stroke-width=".5"/></svg>
<svg style="left:711px;top:598.6px" width="8" height="5" viewBox="0 0 8 5"><rect x=".4" y=".4" width="7" height="5" fill="#a9a9a9" stroke="#8a8a8a" stroke-width=".6"/></svg>
<div class="a" style="left:723.8px;top:597.2px;width:115.4px;height:8px;box-sizing:border-box;border:1px solid #bdbdbd;background:#fff"></div>
<div class="a" style="left:727px;top:598.2px;color:#333">主模型</div>
<svg style="left:833px;top:600.4px" width="2.8" height="1.8" viewBox="0 0 2.8 1.8"><path d="M0 0H2.8L1.4 1.8Z" fill="#555"/></svg>
<svg style="left:940.6px;top:598.2px" width="9.6" height="5" viewBox="0 0 9.6 5"><ellipse cx="2.6" cy="2.2" rx="2.1" ry="1.5" fill="none" stroke="#e0a010" stroke-width="1.1"/><ellipse cx="6.8" cy="2.2" rx="2.1" ry="1.5" fill="none" stroke="#e8b020" stroke-width="1.1"/><path d="M4.4 3.4V5" stroke="#444" stroke-width=".8"/></svg>
<svg style="left:955.6px;top:598.4px" width="8.6" height="5" viewBox="0 0 8.6 5"><path d="M.6 4.8L3.4 .8H8L5.4 4.8" fill="#cfe2f7" stroke="#2f6fc0" stroke-width=".8"/><path d="M5.6 2.4V5" stroke="#444" stroke-width=".8"/></svg>
<svg style="left:970px;top:598px" width="9.6" height="5.4" viewBox="0 0 9.6 5.4"><rect x="1" y="1.6" width="3.6" height="3.8" fill="#f0a040" stroke="#b85a10" stroke-width=".6"/><path d="M1 1H4.6" stroke="#b85a10" stroke-width=".8"/><path d="M5.4 .6L9 4.2M9 .6L5.4 4.2" stroke="#dc1e1e" stroke-width="1.1"/></svg>
<svg style="left:985px;top:598px" width="9" height="5.4" viewBox="0 0 9 5.4"><path d="M.6 5.4V2L2.6 .8H4.6V5.4" fill="#cfe2f7" stroke="#2f6fc0" stroke-width=".8"/><path d="M5 .6L8.6 4.2M8.6 .6L5 4.2" stroke="#dc1e1e" stroke-width="1.1"/></svg>
<svg style="left:999.4px;top:598px" width="9" height="5.4" viewBox="0 0 9 5.4"><path d="M3 .4V5M.8 2.6H5.2" stroke="#222" stroke-width=".9"/><path d="M4.6 1.6L8.4 5.4" stroke="#222" stroke-width="1.1"/></svg>
<svg style="left:1013.6px;top:598.4px" width="8.4" height="5" viewBox="0 0 8.4 5"><circle cx="4.2" cy="4.2" r="3.2" fill="none" stroke="#b5b5b5" stroke-width="1.2"/></svg>
<svg style="left:1026px;top:598.6px" width="10" height="5" viewBox="0 0 10 5"><path d="M.6 .6H9.4L6 4V5H4V4Z" fill="#e8f1fb" stroke="#2f6fc0" stroke-width=".8" stroke-linejoin="round"/></svg>
<div class="a" style="left:1037px;top:598.6px;color:#222">:0</div>
<svg style="left:848px;top:536px" width="200" height="44" viewBox="848 536 200 44"><g fill="#fff" fill-opacity=".86"><path d="M866.6 540.2c-8 0-14.4 5.6-14.4 12.6c0 4 2.1 7.400000000000001 5.4 9.7l-1.5 4.6l5.3-2.7c1.4 .4 2.9 .7 4.4 .8c-.3-1-.5-2.1-.5-3.200000000000001c0-6.6 6.2-11.9 13.8-11.9c.5 0 1.1 0 1.6 .1c-1.5-5.7-7.300000000000001-10-14.1-10z"/><path d="M894 562.6c0-5.9-5.8-10.700000000000001-12.9-10.700000000000001s-12.9 4.8-12.9 10.700000000000001s5.8 10.700000000000001 12.9 10.700000000000001c1.5 0 2.9-.2 4.3-.6l4.6 2.5l-1.3-4c3.2-2 5.3-5.1 5.3-8.6z"/></g><g fill="#1a1a00" fill-opacity=".78"><circle cx="861.8" cy="548.8" r="1.7"/><circle cx="871.6" cy="548.8" r="1.7"/><circle cx="876.6" cy="558.6" r="1.5"/><circle cx="884.8" cy="558.6" r="1.5"/></g><text x="900" y="569" font-size="26.6" fill="#fff" fill-opacity=".93" stroke="#fff" stroke-width=".5" stroke-opacity=".8" style="filter:drop-shadow(.7px .7px 0 rgba(0,0,0,.35));font-family:'Liberation Sans','Noto Sans CJK SC',sans-serif">Revit<tspan dx="1.8" font-size="27.2">自行车</tspan></text></svg>
</div></div></body></html>
